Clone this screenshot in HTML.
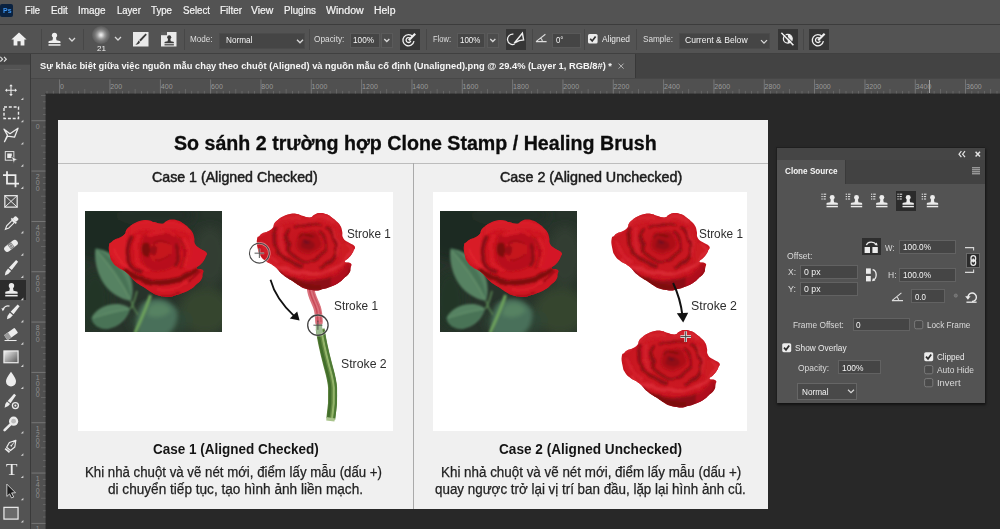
<!DOCTYPE html>
<html lang="vi"><head>
<meta charset="utf-8">
<title>Clone Source</title>
<style>
*{box-sizing:border-box;margin:0;padding:0}
html,body{width:1000px;height:529px;overflow:hidden;background:#282828}
body{position:relative;font-family:"Liberation Sans","DejaVu Sans",sans-serif;color:#e6e6e6;font-size:11px}
.r{position:absolute;display:block}
.t{position:absolute;white-space:nowrap;transform-origin:0 50%;line-height:1}
.f{position:absolute;background:#454545;border:1px solid #636363}
</style>
</head>
<body>
<div class="r" style="left:0.0px;top:0.0px;width:1000.0px;height:24.0px;background:#535353;"></div>
<div class="r" style="left:0.0px;top:23.5px;width:1000.0px;height:1.5px;background:#3c3c3c;"></div>
<div class="r" style="left:0;top:4px;width:13px;height:12.5px;background:#0a2240;border-radius:2px"></div>
<div class="t" style="left: 2.5px; top: 7px; font-size: 7.8px; color: rgb(61, 149, 240); font-weight: bold; transform: scaleX(0.8903);">Ps</div>
<div class="t" style="left: 25px; top: 6px; font-size: 10px; color: rgb(244, 244, 244); font-weight: normal; -webkit-text-stroke: 0.2px rgb(244, 244, 244); transform: scaleX(0.9302);">File</div>
<div class="t" style="left: 51px; top: 6px; font-size: 10px; color: rgb(244, 244, 244); font-weight: normal; -webkit-text-stroke: 0.2px rgb(244, 244, 244); transform: scaleX(0.9748);">Edit</div>
<div class="t" style="left: 78.4px; top: 6px; font-size: 10px; color: rgb(244, 244, 244); font-weight: normal; -webkit-text-stroke: 0.2px rgb(244, 244, 244); transform: scaleX(0.9929);">Image</div>
<div class="t" style="left: 116.7px; top: 6px; font-size: 10px; color: rgb(244, 244, 244); font-weight: normal; -webkit-text-stroke: 0.2px rgb(244, 244, 244); transform: scaleX(0.9514);">Layer</div>
<div class="t" style="left: 151px; top: 6px; font-size: 10px; color: rgb(244, 244, 244); font-weight: normal; -webkit-text-stroke: 0.2px rgb(244, 244, 244); transform: scaleX(0.9683);">Type</div>
<div class="t" style="left: 182.5px; top: 6px; font-size: 10px; color: rgb(244, 244, 244); font-weight: normal; -webkit-text-stroke: 0.2px rgb(244, 244, 244); transform: scaleX(0.9713);">Select</div>
<div class="t" style="left: 219.5px; top: 6px; font-size: 10px; color: rgb(244, 244, 244); font-weight: normal; -webkit-text-stroke: 0.2px rgb(244, 244, 244); transform: scaleX(0.9895);">Filter</div>
<div class="t" style="left: 251.3px; top: 6px; font-size: 10px; color: rgb(244, 244, 244); font-weight: normal; -webkit-text-stroke: 0.2px rgb(244, 244, 244); transform: scaleX(1.0419);">View</div>
<div class="t" style="left: 284px; top: 6px; font-size: 10px; color: rgb(244, 244, 244); font-weight: normal; -webkit-text-stroke: 0.2px rgb(244, 244, 244); transform: scaleX(0.9752);">Plugins</div>
<div class="t" style="left: 326px; top: 6px; font-size: 10px; color: rgb(244, 244, 244); font-weight: normal; -webkit-text-stroke: 0.2px rgb(244, 244, 244); transform: scaleX(1.0596);">Window</div>
<div class="t" style="left: 374px; top: 6px; font-size: 10px; color: rgb(244, 244, 244); font-weight: normal; -webkit-text-stroke: 0.2px rgb(244, 244, 244); transform: scaleX(1.0448);">Help</div>
<div class="r" style="left:0.0px;top:25.0px;width:1000.0px;height:29.0px;background:#535353;"></div>
<div class="r" style="left:0.0px;top:53.0px;width:1000.0px;height:1.0px;background:#404040;"></div>
<div class="r" style="left:41.0px;top:29.0px;width:1.0px;height:21.0px;background:#474747;"></div>
<div class="r" style="left:83.0px;top:29.0px;width:1.0px;height:21.0px;background:#474747;"></div>
<div class="r" style="left:184.0px;top:29.0px;width:1.0px;height:21.0px;background:#474747;"></div>
<div class="r" style="left:308.5px;top:29.0px;width:1.0px;height:21.0px;background:#474747;"></div>
<div class="r" style="left:426.0px;top:29.0px;width:1.0px;height:21.0px;background:#474747;"></div>
<div class="r" style="left:532.0px;top:29.0px;width:1.0px;height:21.0px;background:#474747;"></div>
<div class="r" style="left:584.0px;top:29.0px;width:1.0px;height:21.0px;background:#474747;"></div>
<div class="r" style="left:636.0px;top:29.0px;width:1.0px;height:21.0px;background:#474747;"></div>
<div class="r" style="left:803.0px;top:29.0px;width:1.0px;height:21.0px;background:#474747;"></div>
<svg class="r" style="left:11.0px;top:32.0px;" width="16" height="14" viewBox="0 0 16 14"><path d="M8 0.6 L15.6 7.6 L13.4 7.6 L13.4 13.4 L9.6 13.4 L9.6 9.2 L6.4 9.2 L6.4 13.4 L2.6 13.4 L2.6 7.6 L0.4 7.6 Z" fill="#efefef"></path></svg>
<svg class="r" style="left:44.0px;top:27.0px;" width="40" height="26" viewBox="0 0 40 26"><g transform="translate(10.5,12.3) scale(1.0)" fill="#efefef"><circle cx="0" cy="-4" r="2.6"></circle><path d="M-1.4 -2.4 L1.4 -2.4 L2 1 L5.2 1.6 Q6 1.8 6 2.6 L6 3.8 L-6 3.8 L-6 2.6 Q-6 1.8 -5.2 1.6 L-2 1 Z"></path><rect x="-6" y="4.9" width="12" height="1.5"></rect></g><path d="M25.0 11.0 L28 14.0 L31.0 11.0" fill="none" stroke="#d8d8d8" stroke-width="1.3"></path></svg>
<div class="r" style="left:92px;top:25.5px;width:18px;height:18px;border-radius:50%;background:radial-gradient(circle,#f6f6f6 0%,#d0d0d0 14%,#9c9c9c 30%,#757575 48%,#606060 66%,#565656 84%,#535353 100%)"></div>
<div class="t" style="left: 96.5px; top: 45px; font-size: 7.6px; color: rgb(240, 240, 240); font-weight: normal; transform: scaleX(1.0647);">21</div>
<svg class="r" style="left:110.0px;top:30.0px;" width="16" height="16" viewBox="0 0 16 16"><path d="M5.0 7.0 L8 10.0 L11.0 7.0" fill="none" stroke="#d8d8d8" stroke-width="1.3"></path></svg>
<svg class="r" style="left:133.0px;top:32.0px;" width="16" height="15" viewBox="0 0 16 15"><rect x="0" y="0" width="15.5" height="14.5" fill="#e9e9e9"></rect><path d="M12.6 1.6 L13.8 2.8 L7.6 9.4 L6.2 8 Z" fill="#3a3a3a"></path><path d="M5.6 8.6 L7 10 Q6.2 12.6 2.4 12.8 Q4.6 11 5.6 8.6Z" fill="#3a3a3a"></path></svg>
<svg class="r" style="left:161.0px;top:32.0px;" width="16" height="15" viewBox="0 0 16 15"><rect x="0" y="0" width="15.5" height="14.5" fill="#e9e9e9"></rect><rect x="0" y="0" width="6" height="3.2" fill="#5a5a5a"></rect><g transform="translate(8.2,8.4) scale(0.78)" fill="#3a3a3a"><circle cx="0" cy="-4" r="2.6"></circle><path d="M-1.4 -2.4 L1.4 -2.4 L2 1 L5.2 1.6 Q6 1.8 6 2.6 L6 3.8 L-6 3.8 L-6 2.6 Q-6 1.8 -5.2 1.6 L-2 1 Z"></path><rect x="-6" y="4.9" width="12" height="1.5"></rect></g></svg>
<div class="t" style="left: 190.4px; top: 35px; font-size: 8.7px; color: rgb(222, 222, 222); font-weight: normal; transform: scaleX(0.9356);">Mode:</div>
<div class="f" style="left:219px;top:33px;width:86px;height:15.5px;background:#454545;border-color:#4b4b4b"></div>
<div class="t" style="left: 225.6px; top: 36px; font-size: 8.7px; color: rgb(244, 244, 244); font-weight: normal; transform: scaleX(0.9429);">Normal</div>
<svg class="r" style="left:292.0px;top:33.0px;" width="16" height="16" viewBox="0 0 16 16"><path d="M5.0 6.800000000000001 L8 9.8 L11.0 6.800000000000001" fill="none" stroke="#d8d8d8" stroke-width="1.3"></path></svg>
<div class="t" style="left: 313.6px; top: 35px; font-size: 8.7px; color: rgb(222, 222, 222); font-weight: normal; transform: scaleX(0.9537);">Opacity:</div>
<div class="f" style="left:350px;top:33px;width:30px;height:14.5px;background:#454545;border-color:#595959"></div>
<div class="t" style="left: 353px; top: 36px; font-size: 8.7px; color: rgb(244, 244, 244); font-weight: normal; transform: scaleX(0.9445);">100%</div>
<div class="f" style="left:381px;top:33px;width:11.5px;height:14.5px;background:#4c4c4c;border-color:#5a5a5a"></div>
<svg class="r" style="left:379.0px;top:32.0px;" width="16" height="16" viewBox="0 0 16 16"><path d="M5.25 7.025 L7.8 9.575000000000001 L10.35 7.025" fill="none" stroke="#d8d8d8" stroke-width="1.3"></path></svg>
<div class="r" style="left:399.6px;top:29.0px;width:20.4px;height:20.5px;background:#363636;"></div>
<svg class="r" style="left:399.0px;top:29.0px;" width="22" height="21" viewBox="0 0 22 21"><g fill="none" stroke="#efefef" stroke-width="1.3"><path d="M13.8 7.6000000000000005 A5.6 5.6 0 1 0 15.0 12.200000000000001"></path><path d="M11.2 9.4 A2.4 2.4 0 1 0 11.8 11.8"></path><path d="M9.799999999999999 11.200000000000001 L16.2 4.800000000000001" stroke-width="2.2"></path></g></svg>
<div class="t" style="left: 433px; top: 35px; font-size: 8.7px; color: rgb(222, 222, 222); font-weight: normal; transform: scaleX(0.8668);">Flow:</div>
<div class="f" style="left:457px;top:33px;width:28px;height:14.5px;background:#454545;border-color:#595959"></div>
<div class="t" style="left: 459.6px; top: 36px; font-size: 8.7px; color: rgb(244, 244, 244); font-weight: normal; transform: scaleX(0.9175);">100%</div>
<div class="f" style="left:487px;top:33px;width:11.5px;height:14.5px;background:#4c4c4c;border-color:#5a5a5a"></div>
<svg class="r" style="left:485.0px;top:32.0px;" width="16" height="16" viewBox="0 0 16 16"><path d="M5.25 7.025 L7.8 9.575000000000001 L10.35 7.025" fill="none" stroke="#d8d8d8" stroke-width="1.3"></path></svg>
<div class="r" style="left:506.4px;top:29.0px;width:20.0px;height:20.5px;background:#363636;"></div>
<svg class="r" style="left:506.0px;top:29.0px;" width="22" height="21" viewBox="0 0 22 21"><g fill="none" stroke="#efefef" stroke-width="1.3"><path d="M7.4 5.2 A5.2 5.2 0 1 0 8.6 15.2"></path><path d="M8.2 14.2 L16.4 4.2 L17.6 11 L13.2 11.6 Z" fill="#363636" stroke-width="1.4"></path></g></svg>
<svg class="r" style="left:535.0px;top:32.0px;" width="14" height="12" viewBox="0 0 14 12"><path d="M1 9.6 L11.6 9.6 M1 9.6 L10.4 2.2 M7.4 9.4 A5 5 0 0 0 5.6 6" fill="none" stroke="#dcdcdc" stroke-width="1.1"></path></svg>
<div class="f" style="left:552.4px;top:33px;width:28.6px;height:14.5px;background:#454545;border-color:#595959"></div>
<div class="t" style="left: 556px; top: 36px; font-size: 8.7px; color: rgb(244, 244, 244); font-weight: normal; transform: scaleX(0.9023);">0°</div>
<svg class="r" style="left:588.0px;top:34.0px;" width="10" height="10" viewBox="0 0 10 10"><rect x="0" y="0" width="9.6" height="9.6" rx="1.6" fill="#ececec"></rect><path d="M2.2 4.8 L4.2 7 L7.6 2.6" fill="none" stroke="#333" stroke-width="1.7"></path></svg>
<div class="t" style="left: 601.6px; top: 35px; font-size: 8.7px; color: rgb(236, 236, 236); font-weight: normal; transform: scaleX(0.966);">Aligned</div>
<div class="t" style="left: 643px; top: 35px; font-size: 8.7px; color: rgb(222, 222, 222); font-weight: normal; transform: scaleX(0.9412);">Sample:</div>
<div class="f" style="left:679px;top:32.5px;width:90.6px;height:16.5px;background:#454545;border-color:#4b4b4b"></div>
<div class="t" style="left: 685px; top: 36px; font-size: 8.7px; color: rgb(244, 244, 244); font-weight: normal; transform: scaleX(0.9895);">Current &amp; Below</div>
<svg class="r" style="left:756.4px;top:33.0px;" width="16" height="16" viewBox="0 0 16 16"><path d="M5.0 7.1 L8 10.1 L11.0 7.1" fill="none" stroke="#d8d8d8" stroke-width="1.3"></path></svg>
<div class="r" style="left:778.0px;top:29.0px;width:19.5px;height:20.5px;background:#363636;"></div>
<svg class="r" style="left:777.0px;top:29.0px;" width="22" height="21" viewBox="0 0 22 21"><circle cx="10.8" cy="9.8" r="4.4" fill="none" stroke="#efefef" stroke-width="1.3"></circle><path d="M10.8 5.4 A4.4 4.4 0 0 1 10.8 14.2 Z" fill="#efefef"></path><path d="M4.4 3.8 L16.4 16.2" stroke="#efefef" stroke-width="1.6"></path><path d="M5.4 2.8 L17.4 15.2" stroke="#363636" stroke-width="1"></path></svg>
<div class="r" style="left:809.0px;top:29.0px;width:20.0px;height:20.5px;background:#363636;"></div>
<svg class="r" style="left:808.0px;top:29.0px;" width="22" height="21" viewBox="0 0 22 21"><g fill="none" stroke="#efefef" stroke-width="1.3"><path d="M14.2 7.6000000000000005 A5.6 5.6 0 1 0 15.4 12.200000000000001"></path><path d="M11.6 9.4 A2.4 2.4 0 1 0 12.2 11.8"></path><path d="M10.2 11.200000000000001 L16.6 4.800000000000001" stroke-width="2.2"></path></g></svg>
<div class="r" style="left:0.0px;top:54.0px;width:1000.0px;height:24.5px;background:#434343;"></div>
<div class="r" style="left:31.0px;top:54.0px;width:603.5px;height:24.5px;background:#535353;"></div>
<div class="r" style="left:634.5px;top:54.0px;width:1.0px;height:24.5px;background:#383838;"></div>
<div class="t" style="left: 39.5px; top: 61px; font-size: 9.6px; color: rgb(246, 246, 246); font-weight: bold; transform: scaleX(0.9723);">Sự khác biệt giữa việc nguồn mẫu chạy theo chuột (Aligned) và nguồn mẫu cố định (Unaligned).png @ 29.4% (Layer 1, RGB/8#) *</div>
<svg class="r" style="left:617.0px;top:62.0px;" width="9" height="9" viewBox="0 0 9 9"><path d="M1.6 1.6 L6.6 6.6 M6.6 1.6 L1.6 6.6" stroke="#b4b4b4" stroke-width="1" fill="none"></path></svg>
<div class="r" style="left:31.0px;top:78.5px;width:969.0px;height:14.5px;background:#505050;"></div>
<div class="r" style="left:31.0px;top:78.0px;width:969.0px;height:0.8px;background:#474747;"></div>
<div class="r" style="left:31.0px;top:92.6px;width:969.0px;height:0.9px;background:#3e3e3e;"></div>
<div class="r" style="left:31.0px;top:93.0px;width:14.5px;height:436.0px;background:#505050;"></div>
<div class="r" style="left:45.2px;top:93.0px;width:0.9px;height:436.0px;background:#3e3e3e;"></div>
<svg class="r" style="left:31.0px;top:78.5px;" width="969" height="15" viewBox="0 0 969 15"><rect x="15.6" y="11.9" width="0.8" height="2.6" fill="#6c6c6c"></rect><rect x="21.9" y="11.9" width="0.8" height="2.6" fill="#6c6c6c"></rect><rect x="28.2" y="0.5" width="0.9" height="14" fill="#7a7a7a"></rect><rect x="34.5" y="11.9" width="0.8" height="2.6" fill="#6c6c6c"></rect><rect x="40.8" y="11.9" width="0.8" height="2.6" fill="#6c6c6c"></rect><rect x="47.1" y="11.9" width="0.8" height="2.6" fill="#6c6c6c"></rect><rect x="53.4" y="10.0" width="0.8" height="4.5" fill="#6c6c6c"></rect><rect x="59.7" y="11.9" width="0.8" height="2.6" fill="#6c6c6c"></rect><rect x="65.9" y="11.9" width="0.8" height="2.6" fill="#6c6c6c"></rect><rect x="72.2" y="11.9" width="0.8" height="2.6" fill="#6c6c6c"></rect><rect x="78.5" y="0.5" width="0.9" height="14" fill="#7a7a7a"></rect><rect x="84.8" y="11.9" width="0.8" height="2.6" fill="#6c6c6c"></rect><rect x="91.1" y="11.9" width="0.8" height="2.6" fill="#6c6c6c"></rect><rect x="97.4" y="11.9" width="0.8" height="2.6" fill="#6c6c6c"></rect><rect x="103.7" y="10.0" width="0.8" height="4.5" fill="#6c6c6c"></rect><rect x="110.0" y="11.9" width="0.8" height="2.6" fill="#6c6c6c"></rect><rect x="116.3" y="11.9" width="0.8" height="2.6" fill="#6c6c6c"></rect><rect x="122.6" y="11.9" width="0.8" height="2.6" fill="#6c6c6c"></rect><rect x="128.9" y="0.5" width="0.9" height="14" fill="#7a7a7a"></rect><rect x="135.2" y="11.9" width="0.8" height="2.6" fill="#6c6c6c"></rect><rect x="141.4" y="11.9" width="0.8" height="2.6" fill="#6c6c6c"></rect><rect x="147.7" y="11.9" width="0.8" height="2.6" fill="#6c6c6c"></rect><rect x="154.0" y="10.0" width="0.8" height="4.5" fill="#6c6c6c"></rect><rect x="160.3" y="11.9" width="0.8" height="2.6" fill="#6c6c6c"></rect><rect x="166.6" y="11.9" width="0.8" height="2.6" fill="#6c6c6c"></rect><rect x="172.9" y="11.9" width="0.8" height="2.6" fill="#6c6c6c"></rect><rect x="179.2" y="0.5" width="0.9" height="14" fill="#7a7a7a"></rect><rect x="185.5" y="11.9" width="0.8" height="2.6" fill="#6c6c6c"></rect><rect x="191.8" y="11.9" width="0.8" height="2.6" fill="#6c6c6c"></rect><rect x="198.1" y="11.9" width="0.8" height="2.6" fill="#6c6c6c"></rect><rect x="204.4" y="10.0" width="0.8" height="4.5" fill="#6c6c6c"></rect><rect x="210.6" y="11.9" width="0.8" height="2.6" fill="#6c6c6c"></rect><rect x="216.9" y="11.9" width="0.8" height="2.6" fill="#6c6c6c"></rect><rect x="223.2" y="11.9" width="0.8" height="2.6" fill="#6c6c6c"></rect><rect x="229.5" y="0.5" width="0.9" height="14" fill="#7a7a7a"></rect><rect x="235.8" y="11.9" width="0.8" height="2.6" fill="#6c6c6c"></rect><rect x="242.1" y="11.9" width="0.8" height="2.6" fill="#6c6c6c"></rect><rect x="248.4" y="11.9" width="0.8" height="2.6" fill="#6c6c6c"></rect><rect x="254.7" y="10.0" width="0.8" height="4.5" fill="#6c6c6c"></rect><rect x="261.0" y="11.9" width="0.8" height="2.6" fill="#6c6c6c"></rect><rect x="267.3" y="11.9" width="0.8" height="2.6" fill="#6c6c6c"></rect><rect x="273.6" y="11.9" width="0.8" height="2.6" fill="#6c6c6c"></rect><rect x="279.8" y="0.5" width="0.9" height="14" fill="#7a7a7a"></rect><rect x="286.1" y="11.9" width="0.8" height="2.6" fill="#6c6c6c"></rect><rect x="292.4" y="11.9" width="0.8" height="2.6" fill="#6c6c6c"></rect><rect x="298.7" y="11.9" width="0.8" height="2.6" fill="#6c6c6c"></rect><rect x="305.0" y="10.0" width="0.8" height="4.5" fill="#6c6c6c"></rect><rect x="311.3" y="11.9" width="0.8" height="2.6" fill="#6c6c6c"></rect><rect x="317.6" y="11.9" width="0.8" height="2.6" fill="#6c6c6c"></rect><rect x="323.9" y="11.9" width="0.8" height="2.6" fill="#6c6c6c"></rect><rect x="330.2" y="0.5" width="0.9" height="14" fill="#7a7a7a"></rect><rect x="336.5" y="11.9" width="0.8" height="2.6" fill="#6c6c6c"></rect><rect x="342.8" y="11.9" width="0.8" height="2.6" fill="#6c6c6c"></rect><rect x="349.1" y="11.9" width="0.8" height="2.6" fill="#6c6c6c"></rect><rect x="355.3" y="10.0" width="0.8" height="4.5" fill="#6c6c6c"></rect><rect x="361.6" y="11.9" width="0.8" height="2.6" fill="#6c6c6c"></rect><rect x="367.9" y="11.9" width="0.8" height="2.6" fill="#6c6c6c"></rect><rect x="374.2" y="11.9" width="0.8" height="2.6" fill="#6c6c6c"></rect><rect x="380.5" y="0.5" width="0.9" height="14" fill="#7a7a7a"></rect><rect x="386.8" y="11.9" width="0.8" height="2.6" fill="#6c6c6c"></rect><rect x="393.1" y="11.9" width="0.8" height="2.6" fill="#6c6c6c"></rect><rect x="399.4" y="11.9" width="0.8" height="2.6" fill="#6c6c6c"></rect><rect x="405.7" y="10.0" width="0.8" height="4.5" fill="#6c6c6c"></rect><rect x="412.0" y="11.9" width="0.8" height="2.6" fill="#6c6c6c"></rect><rect x="418.3" y="11.9" width="0.8" height="2.6" fill="#6c6c6c"></rect><rect x="424.5" y="11.9" width="0.8" height="2.6" fill="#6c6c6c"></rect><rect x="430.8" y="0.5" width="0.9" height="14" fill="#7a7a7a"></rect><rect x="437.1" y="11.9" width="0.8" height="2.6" fill="#6c6c6c"></rect><rect x="443.4" y="11.9" width="0.8" height="2.6" fill="#6c6c6c"></rect><rect x="449.7" y="11.9" width="0.8" height="2.6" fill="#6c6c6c"></rect><rect x="456.0" y="10.0" width="0.8" height="4.5" fill="#6c6c6c"></rect><rect x="462.3" y="11.9" width="0.8" height="2.6" fill="#6c6c6c"></rect><rect x="468.6" y="11.9" width="0.8" height="2.6" fill="#6c6c6c"></rect><rect x="474.9" y="11.9" width="0.8" height="2.6" fill="#6c6c6c"></rect><rect x="481.2" y="0.5" width="0.9" height="14" fill="#7a7a7a"></rect><rect x="487.5" y="11.9" width="0.8" height="2.6" fill="#6c6c6c"></rect><rect x="493.8" y="11.9" width="0.8" height="2.6" fill="#6c6c6c"></rect><rect x="500.0" y="11.9" width="0.8" height="2.6" fill="#6c6c6c"></rect><rect x="506.3" y="10.0" width="0.8" height="4.5" fill="#6c6c6c"></rect><rect x="512.6" y="11.9" width="0.8" height="2.6" fill="#6c6c6c"></rect><rect x="518.9" y="11.9" width="0.8" height="2.6" fill="#6c6c6c"></rect><rect x="525.2" y="11.9" width="0.8" height="2.6" fill="#6c6c6c"></rect><rect x="531.5" y="0.5" width="0.9" height="14" fill="#7a7a7a"></rect><rect x="537.8" y="11.9" width="0.8" height="2.6" fill="#6c6c6c"></rect><rect x="544.1" y="11.9" width="0.8" height="2.6" fill="#6c6c6c"></rect><rect x="550.4" y="11.9" width="0.8" height="2.6" fill="#6c6c6c"></rect><rect x="556.7" y="10.0" width="0.8" height="4.5" fill="#6c6c6c"></rect><rect x="563.0" y="11.9" width="0.8" height="2.6" fill="#6c6c6c"></rect><rect x="569.2" y="11.9" width="0.8" height="2.6" fill="#6c6c6c"></rect><rect x="575.5" y="11.9" width="0.8" height="2.6" fill="#6c6c6c"></rect><rect x="581.8" y="0.5" width="0.9" height="14" fill="#7a7a7a"></rect><rect x="588.1" y="11.9" width="0.8" height="2.6" fill="#6c6c6c"></rect><rect x="594.4" y="11.9" width="0.8" height="2.6" fill="#6c6c6c"></rect><rect x="600.7" y="11.9" width="0.8" height="2.6" fill="#6c6c6c"></rect><rect x="607.0" y="10.0" width="0.8" height="4.5" fill="#6c6c6c"></rect><rect x="613.3" y="11.9" width="0.8" height="2.6" fill="#6c6c6c"></rect><rect x="619.6" y="11.9" width="0.8" height="2.6" fill="#6c6c6c"></rect><rect x="625.9" y="11.9" width="0.8" height="2.6" fill="#6c6c6c"></rect><rect x="632.2" y="0.5" width="0.9" height="14" fill="#7a7a7a"></rect><rect x="638.5" y="11.9" width="0.8" height="2.6" fill="#6c6c6c"></rect><rect x="644.7" y="11.9" width="0.8" height="2.6" fill="#6c6c6c"></rect><rect x="651.0" y="11.9" width="0.8" height="2.6" fill="#6c6c6c"></rect><rect x="657.3" y="10.0" width="0.8" height="4.5" fill="#6c6c6c"></rect><rect x="663.6" y="11.9" width="0.8" height="2.6" fill="#6c6c6c"></rect><rect x="669.9" y="11.9" width="0.8" height="2.6" fill="#6c6c6c"></rect><rect x="676.2" y="11.9" width="0.8" height="2.6" fill="#6c6c6c"></rect><rect x="682.5" y="0.5" width="0.9" height="14" fill="#7a7a7a"></rect><rect x="688.8" y="11.9" width="0.8" height="2.6" fill="#6c6c6c"></rect><rect x="695.1" y="11.9" width="0.8" height="2.6" fill="#6c6c6c"></rect><rect x="701.4" y="11.9" width="0.8" height="2.6" fill="#6c6c6c"></rect><rect x="707.7" y="10.0" width="0.8" height="4.5" fill="#6c6c6c"></rect><rect x="713.9" y="11.9" width="0.8" height="2.6" fill="#6c6c6c"></rect><rect x="720.2" y="11.9" width="0.8" height="2.6" fill="#6c6c6c"></rect><rect x="726.5" y="11.9" width="0.8" height="2.6" fill="#6c6c6c"></rect><rect x="732.8" y="0.5" width="0.9" height="14" fill="#7a7a7a"></rect><rect x="739.1" y="11.9" width="0.8" height="2.6" fill="#6c6c6c"></rect><rect x="745.4" y="11.9" width="0.8" height="2.6" fill="#6c6c6c"></rect><rect x="751.7" y="11.9" width="0.8" height="2.6" fill="#6c6c6c"></rect><rect x="758.0" y="10.0" width="0.8" height="4.5" fill="#6c6c6c"></rect><rect x="764.3" y="11.9" width="0.8" height="2.6" fill="#6c6c6c"></rect><rect x="770.6" y="11.9" width="0.8" height="2.6" fill="#6c6c6c"></rect><rect x="776.9" y="11.9" width="0.8" height="2.6" fill="#6c6c6c"></rect><rect x="783.1" y="0.5" width="0.9" height="14" fill="#7a7a7a"></rect><rect x="789.4" y="11.9" width="0.8" height="2.6" fill="#6c6c6c"></rect><rect x="795.7" y="11.9" width="0.8" height="2.6" fill="#6c6c6c"></rect><rect x="802.0" y="11.9" width="0.8" height="2.6" fill="#6c6c6c"></rect><rect x="808.3" y="10.0" width="0.8" height="4.5" fill="#6c6c6c"></rect><rect x="814.6" y="11.9" width="0.8" height="2.6" fill="#6c6c6c"></rect><rect x="820.9" y="11.9" width="0.8" height="2.6" fill="#6c6c6c"></rect><rect x="827.2" y="11.9" width="0.8" height="2.6" fill="#6c6c6c"></rect><rect x="833.5" y="0.5" width="0.9" height="14" fill="#7a7a7a"></rect><rect x="839.8" y="11.9" width="0.8" height="2.6" fill="#6c6c6c"></rect><rect x="846.1" y="11.9" width="0.8" height="2.6" fill="#6c6c6c"></rect><rect x="852.4" y="11.9" width="0.8" height="2.6" fill="#6c6c6c"></rect><rect x="858.6" y="10.0" width="0.8" height="4.5" fill="#6c6c6c"></rect><rect x="864.9" y="11.9" width="0.8" height="2.6" fill="#6c6c6c"></rect><rect x="871.2" y="11.9" width="0.8" height="2.6" fill="#6c6c6c"></rect><rect x="877.5" y="11.9" width="0.8" height="2.6" fill="#6c6c6c"></rect><rect x="883.8" y="0.5" width="0.9" height="14" fill="#7a7a7a"></rect><rect x="890.1" y="11.9" width="0.8" height="2.6" fill="#6c6c6c"></rect><rect x="896.4" y="11.9" width="0.8" height="2.6" fill="#6c6c6c"></rect><rect x="902.7" y="11.9" width="0.8" height="2.6" fill="#6c6c6c"></rect><rect x="909.0" y="10.0" width="0.8" height="4.5" fill="#6c6c6c"></rect><rect x="915.3" y="11.9" width="0.8" height="2.6" fill="#6c6c6c"></rect><rect x="921.6" y="11.9" width="0.8" height="2.6" fill="#6c6c6c"></rect><rect x="927.8" y="11.9" width="0.8" height="2.6" fill="#6c6c6c"></rect><rect x="934.1" y="0.5" width="0.9" height="14" fill="#7a7a7a"></rect><rect x="940.4" y="11.9" width="0.8" height="2.6" fill="#6c6c6c"></rect><rect x="946.7" y="11.9" width="0.8" height="2.6" fill="#6c6c6c"></rect><rect x="953.0" y="11.9" width="0.8" height="2.6" fill="#6c6c6c"></rect><rect x="959.3" y="10.0" width="0.8" height="4.5" fill="#6c6c6c"></rect><rect x="965.6" y="11.9" width="0.8" height="2.6" fill="#6c6c6c"></rect></svg>
<div class="t" style="left:60.0px;top:83px;font-size:7px;color:#9a9a9a;font-weight:normal;letter-spacing:0.1px;">0</div>
<div class="t" style="left:110.3px;top:83px;font-size:7px;color:#9a9a9a;font-weight:normal;letter-spacing:0.1px;">200</div>
<div class="t" style="left:160.7px;top:83px;font-size:7px;color:#9a9a9a;font-weight:normal;letter-spacing:0.1px;">400</div>
<div class="t" style="left:211.0px;top:83px;font-size:7px;color:#9a9a9a;font-weight:normal;letter-spacing:0.1px;">600</div>
<div class="t" style="left:261.3px;top:83px;font-size:7px;color:#9a9a9a;font-weight:normal;letter-spacing:0.1px;">800</div>
<div class="t" style="left:311.6px;top:83px;font-size:7px;color:#9a9a9a;font-weight:normal;letter-spacing:0.1px;">1000</div>
<div class="t" style="left:362.0px;top:83px;font-size:7px;color:#9a9a9a;font-weight:normal;letter-spacing:0.1px;">1200</div>
<div class="t" style="left:412.3px;top:83px;font-size:7px;color:#9a9a9a;font-weight:normal;letter-spacing:0.1px;">1400</div>
<div class="t" style="left:462.6px;top:83px;font-size:7px;color:#9a9a9a;font-weight:normal;letter-spacing:0.1px;">1600</div>
<div class="t" style="left:513.0px;top:83px;font-size:7px;color:#9a9a9a;font-weight:normal;letter-spacing:0.1px;">1800</div>
<div class="t" style="left:563.3px;top:83px;font-size:7px;color:#9a9a9a;font-weight:normal;letter-spacing:0.1px;">2000</div>
<div class="t" style="left:613.6px;top:83px;font-size:7px;color:#9a9a9a;font-weight:normal;letter-spacing:0.1px;">2200</div>
<div class="t" style="left:664.0px;top:83px;font-size:7px;color:#9a9a9a;font-weight:normal;letter-spacing:0.1px;">2400</div>
<div class="t" style="left:714.3px;top:83px;font-size:7px;color:#9a9a9a;font-weight:normal;letter-spacing:0.1px;">2600</div>
<div class="t" style="left:764.6px;top:83px;font-size:7px;color:#9a9a9a;font-weight:normal;letter-spacing:0.1px;">2800</div>
<div class="t" style="left:814.9px;top:83px;font-size:7px;color:#9a9a9a;font-weight:normal;letter-spacing:0.1px;">3000</div>
<div class="t" style="left:865.3px;top:83px;font-size:7px;color:#9a9a9a;font-weight:normal;letter-spacing:0.1px;">3200</div>
<div class="t" style="left:915.6px;top:83px;font-size:7px;color:#9a9a9a;font-weight:normal;letter-spacing:0.1px;">3400</div>
<div class="t" style="left:965.9px;top:83px;font-size:7px;color:#9a9a9a;font-weight:normal;letter-spacing:0.1px;">3600</div>
<svg class="r" style="left:31.0px;top:93.0px;" width="15" height="436" viewBox="0 0 15 436"><rect x="10.0" y="2.1" width="4.5" height="0.8" fill="#6c6c6c"></rect><rect x="11.9" y="8.4" width="2.6" height="0.8" fill="#6c6c6c"></rect><rect x="11.9" y="14.7" width="2.6" height="0.8" fill="#6c6c6c"></rect><rect x="11.9" y="21.0" width="2.6" height="0.8" fill="#6c6c6c"></rect><rect x="0.5" y="27.3" width="14" height="0.9" fill="#7a7a7a"></rect><rect x="11.9" y="33.6" width="2.6" height="0.8" fill="#6c6c6c"></rect><rect x="11.9" y="39.9" width="2.6" height="0.8" fill="#6c6c6c"></rect><rect x="11.9" y="46.2" width="2.6" height="0.8" fill="#6c6c6c"></rect><rect x="10.0" y="52.5" width="4.5" height="0.8" fill="#6c6c6c"></rect><rect x="11.9" y="58.8" width="2.6" height="0.8" fill="#6c6c6c"></rect><rect x="11.9" y="65.0" width="2.6" height="0.8" fill="#6c6c6c"></rect><rect x="11.9" y="71.3" width="2.6" height="0.8" fill="#6c6c6c"></rect><rect x="0.5" y="77.6" width="14" height="0.9" fill="#7a7a7a"></rect><rect x="11.9" y="83.9" width="2.6" height="0.8" fill="#6c6c6c"></rect><rect x="11.9" y="90.2" width="2.6" height="0.8" fill="#6c6c6c"></rect><rect x="11.9" y="96.5" width="2.6" height="0.8" fill="#6c6c6c"></rect><rect x="10.0" y="102.8" width="4.5" height="0.8" fill="#6c6c6c"></rect><rect x="11.9" y="109.1" width="2.6" height="0.8" fill="#6c6c6c"></rect><rect x="11.9" y="115.4" width="2.6" height="0.8" fill="#6c6c6c"></rect><rect x="11.9" y="121.7" width="2.6" height="0.8" fill="#6c6c6c"></rect><rect x="0.5" y="128.0" width="14" height="0.9" fill="#7a7a7a"></rect><rect x="11.9" y="134.3" width="2.6" height="0.8" fill="#6c6c6c"></rect><rect x="11.9" y="140.5" width="2.6" height="0.8" fill="#6c6c6c"></rect><rect x="11.9" y="146.8" width="2.6" height="0.8" fill="#6c6c6c"></rect><rect x="10.0" y="153.1" width="4.5" height="0.8" fill="#6c6c6c"></rect><rect x="11.9" y="159.4" width="2.6" height="0.8" fill="#6c6c6c"></rect><rect x="11.9" y="165.7" width="2.6" height="0.8" fill="#6c6c6c"></rect><rect x="11.9" y="172.0" width="2.6" height="0.8" fill="#6c6c6c"></rect><rect x="0.5" y="178.3" width="14" height="0.9" fill="#7a7a7a"></rect><rect x="11.9" y="184.6" width="2.6" height="0.8" fill="#6c6c6c"></rect><rect x="11.9" y="190.9" width="2.6" height="0.8" fill="#6c6c6c"></rect><rect x="11.9" y="197.2" width="2.6" height="0.8" fill="#6c6c6c"></rect><rect x="10.0" y="203.5" width="4.5" height="0.8" fill="#6c6c6c"></rect><rect x="11.9" y="209.7" width="2.6" height="0.8" fill="#6c6c6c"></rect><rect x="11.9" y="216.0" width="2.6" height="0.8" fill="#6c6c6c"></rect><rect x="11.9" y="222.3" width="2.6" height="0.8" fill="#6c6c6c"></rect><rect x="0.5" y="228.6" width="14" height="0.9" fill="#7a7a7a"></rect><rect x="11.9" y="234.9" width="2.6" height="0.8" fill="#6c6c6c"></rect><rect x="11.9" y="241.2" width="2.6" height="0.8" fill="#6c6c6c"></rect><rect x="11.9" y="247.5" width="2.6" height="0.8" fill="#6c6c6c"></rect><rect x="10.0" y="253.8" width="4.5" height="0.8" fill="#6c6c6c"></rect><rect x="11.9" y="260.1" width="2.6" height="0.8" fill="#6c6c6c"></rect><rect x="11.9" y="266.4" width="2.6" height="0.8" fill="#6c6c6c"></rect><rect x="11.9" y="272.7" width="2.6" height="0.8" fill="#6c6c6c"></rect><rect x="0.5" y="278.9" width="14" height="0.9" fill="#7a7a7a"></rect><rect x="11.9" y="285.2" width="2.6" height="0.8" fill="#6c6c6c"></rect><rect x="11.9" y="291.5" width="2.6" height="0.8" fill="#6c6c6c"></rect><rect x="11.9" y="297.8" width="2.6" height="0.8" fill="#6c6c6c"></rect><rect x="10.0" y="304.1" width="4.5" height="0.8" fill="#6c6c6c"></rect><rect x="11.9" y="310.4" width="2.6" height="0.8" fill="#6c6c6c"></rect><rect x="11.9" y="316.7" width="2.6" height="0.8" fill="#6c6c6c"></rect><rect x="11.9" y="323.0" width="2.6" height="0.8" fill="#6c6c6c"></rect><rect x="0.5" y="329.3" width="14" height="0.9" fill="#7a7a7a"></rect><rect x="11.9" y="335.6" width="2.6" height="0.8" fill="#6c6c6c"></rect><rect x="11.9" y="341.9" width="2.6" height="0.8" fill="#6c6c6c"></rect><rect x="11.9" y="348.2" width="2.6" height="0.8" fill="#6c6c6c"></rect><rect x="10.0" y="354.4" width="4.5" height="0.8" fill="#6c6c6c"></rect><rect x="11.9" y="360.7" width="2.6" height="0.8" fill="#6c6c6c"></rect><rect x="11.9" y="367.0" width="2.6" height="0.8" fill="#6c6c6c"></rect><rect x="11.9" y="373.3" width="2.6" height="0.8" fill="#6c6c6c"></rect><rect x="0.5" y="379.6" width="14" height="0.9" fill="#7a7a7a"></rect><rect x="11.9" y="385.9" width="2.6" height="0.8" fill="#6c6c6c"></rect><rect x="11.9" y="392.2" width="2.6" height="0.8" fill="#6c6c6c"></rect><rect x="11.9" y="398.5" width="2.6" height="0.8" fill="#6c6c6c"></rect><rect x="10.0" y="404.8" width="4.5" height="0.8" fill="#6c6c6c"></rect><rect x="11.9" y="411.1" width="2.6" height="0.8" fill="#6c6c6c"></rect><rect x="11.9" y="417.4" width="2.6" height="0.8" fill="#6c6c6c"></rect><rect x="11.9" y="423.6" width="2.6" height="0.8" fill="#6c6c6c"></rect><rect x="0.5" y="429.9" width="14" height="0.9" fill="#7a7a7a"></rect></svg>
<div class="t" style="left:33.2px;top:122.8px;font-size:7px;color:#8e8e8e;writing-mode:vertical-rl;text-orientation:upright;letter-spacing:-1.2px;line-height:1;width:8px">0</div>
<div class="t" style="left:33.2px;top:173.1px;font-size:7px;color:#8e8e8e;writing-mode:vertical-rl;text-orientation:upright;letter-spacing:-1.2px;line-height:1;width:8px">200</div>
<div class="t" style="left:33.2px;top:223.5px;font-size:7px;color:#8e8e8e;writing-mode:vertical-rl;text-orientation:upright;letter-spacing:-1.2px;line-height:1;width:8px">400</div>
<div class="t" style="left:33.2px;top:273.8px;font-size:7px;color:#8e8e8e;writing-mode:vertical-rl;text-orientation:upright;letter-spacing:-1.2px;line-height:1;width:8px">600</div>
<div class="t" style="left:33.2px;top:324.1px;font-size:7px;color:#8e8e8e;writing-mode:vertical-rl;text-orientation:upright;letter-spacing:-1.2px;line-height:1;width:8px">800</div>
<div class="t" style="left:33.2px;top:374.4px;font-size:7px;color:#8e8e8e;writing-mode:vertical-rl;text-orientation:upright;letter-spacing:-1.2px;line-height:1;width:8px">1000</div>
<div class="t" style="left:33.2px;top:424.8px;font-size:7px;color:#8e8e8e;writing-mode:vertical-rl;text-orientation:upright;letter-spacing:-1.2px;line-height:1;width:8px">1200</div>
<div class="t" style="left:33.2px;top:475.1px;font-size:7px;color:#8e8e8e;writing-mode:vertical-rl;text-orientation:upright;letter-spacing:-1.2px;line-height:1;width:8px">1400</div>
<div class="t" style="left:33.2px;top:525.4px;font-size:7px;color:#8e8e8e;writing-mode:vertical-rl;text-orientation:upright;letter-spacing:-1.2px;line-height:1;width:8px">1600</div>
<div class="r" style="left:31.0px;top:78.5px;width:14.5px;height:14.5px;background:#505050;"></div>
<div class="r" style="left:929.0px;top:80.0px;width:1.0px;height:12.5px;background:#a0a0a0;"></div>
<div class="r" style="left:0.0px;top:54.0px;width:29.5px;height:475.0px;background:#535353;"></div>
<div class="r" style="left:29.5px;top:54.0px;width:1.5px;height:475.0px;background:#3a3a3a;"></div>
<div class="r" style="left:0.0px;top:54.0px;width:29.5px;height:10.0px;background:#454545;"></div>
<div class="r" style="left:0.0px;top:64.0px;width:29.5px;height:1.0px;background:#494949;"></div>
<svg class="r" style="left:0.0px;top:54.5px;" width="12" height="9" viewBox="0 0 12 9"><path d="M0.3 1.8 L2.6 4.2 L0.3 6.6 M4 1.8 L6.3 4.2 L4 6.6" fill="none" stroke="#dddddd" stroke-width="1.2"></path></svg>
<div class="r" style="left:4.0px;top:68.5px;width:17.0px;height:1.0px;background:#606060;"></div>
<div class="r" style="left:0.0px;top:280.0px;width:25.5px;height:20.0px;background:#2c2c2c;"></div>
<svg class="r" style="left:0.0px;top:54.0px;" width="30" height="475" viewBox="0 54 30 475"><g transform="translate(11,90.2) scale(0.8) translate(-11,-90.2)"><g stroke="#ececec" stroke-width="1.3" fill="#ececec"><path d="M5 90.2 H17 M11 84.2 V96.2" fill="none"></path><path d="M3.5 90.2 l2.6 -2.2 v4.4 Z M18.5 90.2 l-2.6 -2.2 v4.4 Z M11 82.7 l-2.2 2.6 h4.4 Z M11 97.7 l-2.2 -2.6 h4.4 Z" stroke="none"></path></g></g><path d="M23.4 97.4 L23.4 100.0 L20.8 100.0 Z" fill="#cfcfcf"></path><rect x="4" y="106.94" width="14.5" height="11.5" fill="none" stroke="#ececec" stroke-width="1.4" stroke-dasharray="3 1.8"></rect><path d="M23.4 119.64 L23.4 122.24 L20.8 122.24 Z" fill="#cfcfcf"></path><path d="M4 129.18 L10 133.68 L18 128.18 L14.5 137.18 L7.5 136.18 L4.5 141.68 L7.4 135.18 Z" fill="none" stroke="#ececec" stroke-width="1.3" stroke-linejoin="round"></path><path d="M23.4 141.88 L23.4 144.48000000000002 L20.8 144.48000000000002 Z" fill="#cfcfcf"></path><g transform="translate(11,156.92000000000002) scale(0.82) translate(-11,-156.92000000000002)"><rect x="4" y="150.42000000000002" width="10.5" height="10.5" fill="none" stroke="#ececec" stroke-width="1.1"></rect><rect x="6.4" y="152.72000000000003" width="5.6" height="5.6" fill="#ececec"></rect><path d="M11.6 156.32000000000002 L19 160.52 L15.6 161.32000000000002 L14.4 164.92000000000002 Z" fill="#ececec" stroke="#535353" stroke-width="0.8"></path></g><path d="M23.4 164.12 L23.4 166.72000000000003 L20.8 166.72000000000003 Z" fill="#cfcfcf"></path><path d="M7 171.16 V183.66 H19 M3 175.16 H15.5 V187.16" fill="none" stroke="#ececec" stroke-width="1.8"></path><path d="M23.4 186.35999999999999 L23.4 188.96 L20.8 188.96 Z" fill="#cfcfcf"></path><g transform="translate(11,201.39999999999998) scale(0.88) translate(-11,-201.39999999999998)"><rect x="4" y="194.89999999999998" width="14" height="13" fill="none" stroke="#ececec" stroke-width="1.4"></rect><path d="M4 194.89999999999998 L18 207.89999999999998 M18 194.89999999999998 L4 207.89999999999998" stroke="#ececec" stroke-width="1.1"></path></g><g transform="translate(11,223.64) scale(0.92) translate(-11,-223.64)"><g transform="translate(11,223.64) rotate(45)"><rect x="-2.6" y="-9.5" width="5.2" height="4.6" rx="1.2" fill="#ececec"></rect><rect x="-3.8" y="-5.2" width="7.6" height="1.8" fill="#ececec"></rect><path d="M-1.7 -3.4 H1.7 V5 L0 8.6 L-1.7 5 Z" fill="none" stroke="#ececec" stroke-width="1.2"></path></g></g><path d="M23.4 230.83999999999997 L23.4 233.44 L20.8 233.44 Z" fill="#cfcfcf"></path><g transform="translate(11,245.88) scale(0.86) translate(-11,-245.88)"><g transform="translate(11,245.88) rotate(-38)"><rect x="-9" y="-3.6" width="18" height="7.2" rx="3.4" fill="#ececec"></rect><rect x="-2.6" y="-3.6" width="5.2" height="7.2" fill="#8a8a8a"></rect><circle cx="-1" cy="-1.2" r="0.6" fill="#ececec"></circle><circle cx="1" cy="1.2" r="0.6" fill="#ececec"></circle><circle cx="1" cy="-1.2" r="0.6" fill="#ececec"></circle><circle cx="-1" cy="1.2" r="0.6" fill="#ececec"></circle></g></g><path d="M23.4 253.07999999999998 L23.4 255.68 L20.8 255.68 Z" fill="#cfcfcf"></path><g transform="translate(11,268.12) rotate(40)"><path d="M-1.3 -9.5 H1.3 L1.9 1 H-1.9 Z" fill="#ececec"></path><path d="M-2 2.2 H2 Q2.4 6.4 0 9.6 Q-2.4 6.4 -2 2.2Z" fill="#ececec"></path></g><path d="M23.4 275.32 L23.4 277.92 L20.8 277.92 Z" fill="#cfcfcf"></path><g transform="translate(11,290.36) scale(0.9) translate(-11,-290.36)"><g transform="translate(11.5,289.76) scale(1.15)" fill="#ececec"><circle cx="0" cy="-4" r="2.6"></circle><path d="M-1.4 -2.4 L1.4 -2.4 L2 1 L5.2 1.6 Q6 1.8 6 2.6 L6 3.8 L-6 3.8 L-6 2.6 Q-6 1.8 -5.2 1.6 L-2 1 Z"></path><rect x="-6" y="4.9" width="12" height="1.5"></rect></g></g><path d="M23.4 297.56 L23.4 300.16 L20.8 300.16 Z" fill="#cfcfcf"></path><g transform="translate(12.5,312.59999999999997) rotate(40)"><path d="M-1.3 -9.5 H1.3 L1.9 0.6 H-1.9 Z" fill="#ececec"></path><path d="M-2 1.8 H2 Q2.4 5.6 0 8.6 Q-2.4 5.6 -2 1.8Z" fill="#ececec"></path></g><path d="M3 309.59999999999997 A5 5 0 0 1 9.5 306.09999999999997" fill="none" stroke="#ececec" stroke-width="1.2"></path><path d="M1.4000000000000004 308.2 l3.4 0.2 l-2 2.8 Z" fill="#ececec"></path><path d="M23.4 319.79999999999995 L23.4 322.4 L20.8 322.4 Z" fill="#cfcfcf"></path><g transform="translate(11,334.84) scale(0.86) translate(-11,-334.84)"><g transform="translate(11,333.84) rotate(-35)"><rect x="-7.5" y="-3.6" width="15" height="7.2" rx="1" fill="#ececec"></rect><rect x="-7.5" y="-3.6" width="5.6" height="7.2" rx="1" fill="#9a9a9a"></rect></g><path d="M3.5 341.44 H17.5" stroke="#ececec" stroke-width="1.2"></path></g><path d="M23.4 342.03999999999996 L23.4 344.64 L20.8 344.64 Z" fill="#cfcfcf"></path><g transform="translate(11,357.08) scale(0.94) translate(-11,-357.08)"><defs><linearGradient id="tg" x1="0" y1="0" x2="1" y2="1"><stop offset="0" stop-color="#f4f4f4"></stop><stop offset="1" stop-color="#555"></stop></linearGradient></defs><rect x="3.5" y="350.58" width="15" height="12.5" fill="url(#tg)" stroke="#ececec" stroke-width="1.3"></rect></g><path d="M23.4 364.28 L23.4 366.88 L20.8 366.88 Z" fill="#cfcfcf"></path><path d="M11 371.82 Q16.2 378.82 16 381.52 A5 5 0 0 1 6 381.52 Q5.8 378.82 11 371.82Z" fill="#ececec"></path><path d="M23.4 386.52 L23.4 389.12 L20.8 389.12 Z" fill="#cfcfcf"></path><g transform="translate(9.5,401.55999999999995) rotate(38)"><path d="M-1.2 -9 H1.2 L1.8 0.6 H-1.8 Z" fill="#ececec"></path><path d="M-2 1.6 H2 Q2.4 5.2 0 8 Q-2.4 5.2 -2 1.6Z" fill="#ececec"></path></g><circle cx="15.4" cy="405.55999999999995" r="3" fill="#535353" stroke="#ececec" stroke-width="1.3"></circle><circle cx="15.4" cy="405.55999999999995" r="1.1" fill="#ececec"></circle><circle cx="13.6" cy="421.19999999999993" r="4.6" fill="#ececec"></circle><circle cx="13.6" cy="421.19999999999993" r="2.4" fill="#bdbdbd"></circle><path d="M10.2 424.59999999999997 L4.6 430.19999999999993" stroke="#ececec" stroke-width="2.6" stroke-linecap="round"></path><path d="M23.4 430.99999999999994 L23.4 433.59999999999997 L20.8 433.59999999999997 Z" fill="#cfcfcf"></path><g transform="translate(11,446.03999999999996) scale(0.84) translate(-11,-446.03999999999996)"><g transform="translate(11,446.03999999999996) rotate(40)"><path d="M0 -9 L4.2 -2 L3 4.5 H-3 L-4.2 -2 Z" fill="none" stroke="#ececec" stroke-width="1.4" stroke-linejoin="round"></path><path d="M0 -8 V-1.6" stroke="#ececec" stroke-width="1"></path><circle cx="0" cy="-0.6" r="1.1" fill="#ececec"></circle><rect x="-3.4" y="5.8" width="6.8" height="2" fill="#ececec"></rect></g></g><path d="M23.4 453.23999999999995 L23.4 455.84 L20.8 455.84 Z" fill="#cfcfcf"></path><g transform="translate(11,490.52) scale(0.8) translate(-11,-490.52)"><path d="M5.8 482.52 L16.6 493.32 L11.8 493.52 L14.4 498.71999999999997 L11.6 499.71999999999997 L9.2 494.71999999999997 L5.8 497.91999999999996 Z" fill="#1e1e1e" stroke="#ececec" stroke-width="1"></path></g><path d="M23.4 497.71999999999997 L23.4 500.32 L20.8 500.32 Z" fill="#cfcfcf"></path><g transform="translate(11,513.46) scale(0.94) translate(-11,-512.76)"><rect x="3.5" y="506.26" width="15" height="12.5" fill="#6a6a6a" stroke="#ececec" stroke-width="1.3"></rect></g><path d="M23.4 519.96 L23.4 522.56 L20.8 522.56 Z" fill="#cfcfcf"></path><path d="M23.4 475.47999999999996 L23.4 478.08 L20.8 478.08 Z" fill="#cfcfcf"></path></svg>
<div class="t" style="left: 5.7px; top: 461px; font-size: 17.5px; color: rgb(236, 236, 236); font-weight: normal; font-family: &quot;Liberation Serif&quot;, serif; transform: scaleX(1.0745);">T</div>
<div class="r" style="left:58.2px;top:120.2px;width:709.8px;height:389.0px;background:#f0f0f0;"></div>
<div class="r" style="left:58.2px;top:162.6px;width:709.8px;height:1.0px;background:#bdbdbd;"></div>
<div class="r" style="left:413.0px;top:163.0px;width:1.0px;height:346.2px;background:#aaaaaa;"></div>
<div class="r" style="left:78.3px;top:191.8px;width:314.9px;height:239.0px;background:#ffffff;"></div>
<div class="r" style="left:433.0px;top:191.8px;width:314.3px;height:239.0px;background:#ffffff;"></div>
<div class="t" style="left: 174.3px; top: 134px; font-size: 19.5px; color: rgb(12, 12, 12); font-weight: bold; -webkit-text-stroke: 0.3px rgb(12, 12, 12); transform: scaleX(1.0065);">So sánh 2 trường hợp Clone Stamp / Healing Brush</div>
<div class="t" style="left: 152.3px; top: 170px; font-size: 14.5px; color: rgb(28, 28, 28); font-weight: normal; -webkit-text-stroke: 0.5px rgb(28, 28, 28); transform: scaleX(0.9789);">Case 1 (Aligned Checked)</div>
<div class="t" style="left: 499.8px; top: 170px; font-size: 14.5px; color: rgb(28, 28, 28); font-weight: normal; -webkit-text-stroke: 0.5px rgb(28, 28, 28); transform: scaleX(0.9871);">Case 2 (Aligned Unchecked)</div>
<div class="t" style="left: 152.5px; top: 442px; font-size: 14px; color: rgb(20, 20, 20); font-weight: bold; transform: scaleX(0.9637);">Case 1 (Aligned Checked)</div>
<div class="t" style="left: 498.8px; top: 442px; font-size: 14px; color: rgb(20, 20, 20); font-weight: bold; transform: scaleX(0.972);">Case 2 (Aligned Unchecked)</div>
<div class="t" style="left: 84.9px; top: 466px; font-size: 13.8px; color: rgb(34, 34, 34); font-weight: normal; -webkit-text-stroke: 0.25px rgb(34, 34, 34); transform: scaleX(0.9602);">Khi nhả chuột và vẽ nét mới, điểm lấy mẫu (dấu +)</div>
<div class="t" style="left: 108px; top: 483px; font-size: 13.8px; color: rgb(34, 34, 34); font-weight: normal; -webkit-text-stroke: 0.25px rgb(34, 34, 34); transform: scaleX(0.9865);">di chuyển tiếp tục, tạo hình ảnh liền mạch.</div>
<div class="t" style="left: 441px; top: 466px; font-size: 13.8px; color: rgb(34, 34, 34); font-weight: normal; -webkit-text-stroke: 0.25px rgb(34, 34, 34); transform: scaleX(0.9709);">Khi nhả chuột và vẽ nét mới, điểm lấy mẫu (dấu +)</div>
<div class="t" style="left: 434.7px; top: 483px; font-size: 13.8px; color: rgb(34, 34, 34); font-weight: normal; -webkit-text-stroke: 0.25px rgb(34, 34, 34); transform: scaleX(0.9703);">quay ngược trở lại vị trí ban đầu, lặp lại hình ảnh cũ.</div>
<div class="t" style="left: 347.1px; top: 228px; font-size: 12.8px; color: rgb(46, 46, 46); font-weight: normal; transform: scaleX(0.9188);">Stroke 1</div>
<div class="t" style="left: 334px; top: 300px; font-size: 12.8px; color: rgb(46, 46, 46); font-weight: normal; transform: scaleX(0.923);">Stroke 1</div>
<div class="t" style="left: 341.3px; top: 358px; font-size: 12.8px; color: rgb(46, 46, 46); font-weight: normal; transform: scaleX(0.9586);">Stroke 2</div>
<div class="t" style="left: 699px; top: 228px; font-size: 12.8px; color: rgb(46, 46, 46); font-weight: normal; transform: scaleX(0.923);">Stroke 1</div>
<div class="t" style="left: 691px; top: 300px; font-size: 12.8px; color: rgb(46, 46, 46); font-weight: normal; transform: scaleX(0.9649);">Stroke 2</div>
<svg class="r" style="left:0;top:0" width="0" height="0">
<defs>
<radialGradient id="rg1" cx="0.5" cy="0.4" r="0.65"><stop offset="0" stop-color="#c0131d"></stop><stop offset="0.5" stop-color="#cb1822"></stop><stop offset="1" stop-color="#bf121c"></stop></radialGradient>
<radialGradient id="rg2" cx="0.45" cy="0.45" r="0.65"><stop offset="0" stop-color="#c4121d"></stop><stop offset="0.6" stop-color="#cf1621"></stop><stop offset="1" stop-color="#c2121c"></stop></radialGradient>
<filter id="rb" x="-8%" y="-8%" width="116%" height="116%"><feTurbulence type="fractalNoise" baseFrequency="0.07" numOctaves="2" seed="4" result="n"></feTurbulence><feDisplacementMap in="SourceGraphic" in2="n" scale="7" xChannelSelector="R" yChannelSelector="G" result="d"></feDisplacementMap><feGaussianBlur in="d" stdDeviation="0.8"></feGaussianBlur></filter>
<filter id="rb3" x="-8%" y="-8%" width="116%" height="116%"><feTurbulence type="fractalNoise" baseFrequency="0.06" numOctaves="2" seed="9" result="n"></feTurbulence><feDisplacementMap in="SourceGraphic" in2="n" scale="5" xChannelSelector="R" yChannelSelector="G" result="d"></feDisplacementMap><feGaussianBlur in="d" stdDeviation="1"></feGaussianBlur></filter>
<clipPath id="rc"><path d="M1.0,26.2 C1.5,22.7 2.0,24.3 3.6,22.7 C5.2,21.1 4.9,21.2 7.0,20.1 C9.1,19.0 8.8,19.8 11.4,18.4 C14.0,17.0 14.7,17.0 16.6,14.9 C18.5,12.8 17.0,12.6 18.4,10.5 C19.8,8.4 19.5,8.8 21.8,7.0 C24.1,5.2 23.7,5.2 27.0,3.6 C30.3,2.0 30.3,1.7 34.0,1.0 C37.7,0.3 37.7,0.5 41.0,1.0 C44.3,1.5 42.7,1.8 46.2,2.7 C49.7,3.6 50.7,4.6 54.0,4.4 C57.3,4.2 55.8,2.9 58.4,1.8 C61.0,0.7 60.4,0.2 63.6,0.1 C66.8,-0.0 67.2,0.2 70.5,1.3 C73.8,2.4 73.0,2.4 75.8,4.4 C78.6,6.4 78.7,6.5 81.0,8.8 C83.3,11.1 83.1,10.5 84.5,13.1 C85.9,15.7 85.5,15.4 86.2,18.4 C86.9,21.4 85.6,21.6 87.0,24.4 C88.4,27.2 88.4,26.5 91.4,28.8 C94.4,31.1 96.8,30.8 98.4,33.1 C100.0,35.4 98.2,35.4 97.5,37.5 C96.8,39.6 97.2,38.9 95.8,41.0 C94.4,43.1 94.2,43.2 92.3,45.3 C90.4,47.4 88.1,47.4 88.8,48.8 C89.5,50.2 93.4,48.9 94.9,50.5 C96.4,52.1 95.1,52.3 94.6,54.9 C94.1,57.5 95.0,57.3 93.2,60.1 C91.4,62.9 90.8,62.7 88.0,65.3 C85.2,67.9 86.0,67.6 82.7,69.7 C79.4,71.8 80.0,71.5 75.8,73.2 C71.6,74.9 71.2,75.0 67.0,76.1 C62.8,77.2 64.7,77.6 60.1,77.5 C55.5,77.4 54.3,77.2 49.7,75.8 C45.1,74.4 46.0,74.2 42.7,72.3 C39.4,70.4 41.7,71.6 37.5,68.8 C33.3,66.0 32.1,66.0 27.0,61.8 C21.9,57.6 23.0,56.9 18.4,53.2 C13.8,49.5 13.4,50.7 9.7,47.9 C6.0,45.1 6.5,45.9 4.4,42.7 C2.3,39.5 2.7,40.2 1.8,35.8 C0.9,31.4 0.5,29.7 1.0,26.2 Z"></path></clipPath>
<!-- cut-out variant -->
<symbol id="rose" viewBox="-2 -2 104 82" overflow="visible">
<path d="M1.0,26.2 C1.5,22.7 2.0,24.3 3.6,22.7 C5.2,21.1 4.9,21.2 7.0,20.1 C9.1,19.0 8.8,19.8 11.4,18.4 C14.0,17.0 14.7,17.0 16.6,14.9 C18.5,12.8 17.0,12.6 18.4,10.5 C19.8,8.4 19.5,8.8 21.8,7.0 C24.1,5.2 23.7,5.2 27.0,3.6 C30.3,2.0 30.3,1.7 34.0,1.0 C37.7,0.3 37.7,0.5 41.0,1.0 C44.3,1.5 42.7,1.8 46.2,2.7 C49.7,3.6 50.7,4.6 54.0,4.4 C57.3,4.2 55.8,2.9 58.4,1.8 C61.0,0.7 60.4,0.2 63.6,0.1 C66.8,-0.0 67.2,0.2 70.5,1.3 C73.8,2.4 73.0,2.4 75.8,4.4 C78.6,6.4 78.7,6.5 81.0,8.8 C83.3,11.1 83.1,10.5 84.5,13.1 C85.9,15.7 85.5,15.4 86.2,18.4 C86.9,21.4 85.6,21.6 87.0,24.4 C88.4,27.2 88.4,26.5 91.4,28.8 C94.4,31.1 96.8,30.8 98.4,33.1 C100.0,35.4 98.2,35.4 97.5,37.5 C96.8,39.6 97.2,38.9 95.8,41.0 C94.4,43.1 94.2,43.2 92.3,45.3 C90.4,47.4 88.1,47.4 88.8,48.8 C89.5,50.2 93.4,48.9 94.9,50.5 C96.4,52.1 95.1,52.3 94.6,54.9 C94.1,57.5 95.0,57.3 93.2,60.1 C91.4,62.9 90.8,62.7 88.0,65.3 C85.2,67.9 86.0,67.6 82.7,69.7 C79.4,71.8 80.0,71.5 75.8,73.2 C71.6,74.9 71.2,75.0 67.0,76.1 C62.8,77.2 64.7,77.6 60.1,77.5 C55.5,77.4 54.3,77.2 49.7,75.8 C45.1,74.4 46.0,74.2 42.7,72.3 C39.4,70.4 41.7,71.6 37.5,68.8 C33.3,66.0 32.1,66.0 27.0,61.8 C21.9,57.6 23.0,56.9 18.4,53.2 C13.8,49.5 13.4,50.7 9.7,47.9 C6.0,45.1 6.5,45.9 4.4,42.7 C2.3,39.5 2.7,40.2 1.8,35.8 C0.9,31.4 0.5,29.7 1.0,26.2 Z" fill="url(#rg1)"></path>
<g clip-path="url(#rc)"><g filter="url(#rb)">
<!-- darker lower-left / bottom -->
<path d="M14,48 C20,56 30,62 42,66 C52,69 64,69 76,64 C84,60 90,55 93,51 L97,58 L90,70 L62,80 L44,80 L16,60 Z" fill="#8c0a12"></path>
<path d="M26,62 C36,70 50,75 66,73" fill="none" stroke="#7a0810" stroke-width="3"></path>
<!-- lower right petal -->
<path d="M74,65 C82,61 88,56 92,50.5 L95,51 C95,58 92,63 89,66 C84,70 78,72 74,73 Z" fill="#b0101a"></path>
<!-- big lower petal -->
<path d="M0,26 C4,36 10,44 20,50 C32,57 46,60 60,59 C76,58 90,48 99,34 C100,40 96,46 90,51 C82,59 68,65 52,65 C36,64 22,57 12,50 C5,44 1,36 0,26Z" fill="#cc1923"></path>
<!-- top petals lighter -->
<path d="M19,9 C24,3 32,0 38,0 C44,1 48,3 50,4 C56,1 64,-1 72,2 C80,6 84,12 86,22 C82,14 76,10 68,9 C60,8 54,10 49,13 C42,9 34,9 27,12 C24,13 21,15 19,17 Z" fill="#ce1b25"></path>
<!-- right outer petal -->
<path d="M76,10 C83,14 86,21 87,30 C92,31 96,32 99,34 C94,42 88,47 80,50 C86,42 86,32 83,25 C81,19 79,14 76,10Z" fill="#cd1a24"></path>
<!-- shadow crescents -->
<path d="M20,14 C17,23 18,33 24,41 C29,47 37,52 47,54" fill="none" stroke="#8c0a12" stroke-width="3.6"></path>
<path d="M33,15 C29,23 30,33 35,40 C39,45 45,49 53,50" fill="none" stroke="#8a0a12" stroke-width="3"></path>
<path d="M70,14 C77,20 81,28 80,36 C79,44 73,50 65,54" fill="none" stroke="#8c0a12" stroke-width="3.4"></path>
<path d="M38,15 C46,10 58,10 66,14" fill="none" stroke="#950b14" stroke-width="2.4"></path>
<path d="M62,19 C68,23 71,30 69,37 C67,43 61,47 54,48" fill="none" stroke="#8e0a13" stroke-width="2.6"></path>
<!-- inner bud -->
<path d="M42,23 C46,18 55,17 60,21 C65,25 65,33 61,37 C56,42 48,42 44,38 C40,34 39,28 42,23Z" fill="#ae0f19"></path>
<path d="M43,26 C46,21 54,21 58,24" fill="none" stroke="#860911" stroke-width="2.4"></path>
<path d="M46,30 C48,26 54,26 57,29 C59,32 57,36 53,37 C49,37 45,34 46,30Z" fill="#930b14"></path>
<ellipse cx="51.4" cy="29.4" rx="2.2" ry="1.3" fill="#6e0c24"></ellipse>
<!-- highlight strokes -->
<path d="M4,24 C9,17 16,12 24,6" fill="none" stroke="#d92832" stroke-width="3"></path><path d="M5,30 C7,38 13,44 22,49" fill="none" stroke="#d6242e" stroke-width="3"></path>
<path d="M10,47 C24,57 44,62 62,60.5 C76,59 88,51 96,39" fill="none" stroke="#da2a34" stroke-width="3"></path>
<path d="M54,5.5 C61,3 70,4 78,9" fill="none" stroke="#d82731" stroke-width="2.6"></path><path d="M26,7 C32,3.5 40,3.5 46,6" fill="none" stroke="#d6252f" stroke-width="2.4"></path>
<path d="M26,14 C23,24 25,34 31,42" fill="none" stroke="#d4232d" stroke-width="2.4"></path>
<path d="M75,15 C82,24 84,33 80,43" fill="none" stroke="#d4232d" stroke-width="2.6"></path><path d="M89,31 C93,33 96,35 96,38" fill="none" stroke="#d82731" stroke-width="3"></path>
</g></g>
</symbol>
<!-- photo variant (more contrast) -->
<symbol id="rosep" viewBox="-2 -2 104 82" overflow="visible">
<path d="M1.0,26.2 C1.5,22.7 2.0,24.3 3.6,22.7 C5.2,21.1 4.9,21.2 7.0,20.1 C9.1,19.0 8.8,19.8 11.4,18.4 C14.0,17.0 14.7,17.0 16.6,14.9 C18.5,12.8 17.0,12.6 18.4,10.5 C19.8,8.4 19.5,8.8 21.8,7.0 C24.1,5.2 23.7,5.2 27.0,3.6 C30.3,2.0 30.3,1.7 34.0,1.0 C37.7,0.3 37.7,0.5 41.0,1.0 C44.3,1.5 42.7,1.8 46.2,2.7 C49.7,3.6 50.7,4.6 54.0,4.4 C57.3,4.2 55.8,2.9 58.4,1.8 C61.0,0.7 60.4,0.2 63.6,0.1 C66.8,-0.0 67.2,0.2 70.5,1.3 C73.8,2.4 73.0,2.4 75.8,4.4 C78.6,6.4 78.7,6.5 81.0,8.8 C83.3,11.1 83.1,10.5 84.5,13.1 C85.9,15.7 85.5,15.4 86.2,18.4 C86.9,21.4 85.6,21.6 87.0,24.4 C88.4,27.2 88.4,26.5 91.4,28.8 C94.4,31.1 96.8,30.8 98.4,33.1 C100.0,35.4 98.2,35.4 97.5,37.5 C96.8,39.6 97.2,38.9 95.8,41.0 C94.4,43.1 94.2,43.2 92.3,45.3 C90.4,47.4 88.1,47.4 88.8,48.8 C89.5,50.2 93.4,48.9 94.9,50.5 C96.4,52.1 95.1,52.3 94.6,54.9 C94.1,57.5 95.0,57.3 93.2,60.1 C91.4,62.9 90.8,62.7 88.0,65.3 C85.2,67.9 86.0,67.6 82.7,69.7 C79.4,71.8 80.0,71.5 75.8,73.2 C71.6,74.9 71.2,75.0 67.0,76.1 C62.8,77.2 64.7,77.6 60.1,77.5 C55.5,77.4 54.3,77.2 49.7,75.8 C45.1,74.4 46.0,74.2 42.7,72.3 C39.4,70.4 41.7,71.6 37.5,68.8 C33.3,66.0 32.1,66.0 27.0,61.8 C21.9,57.6 23.0,56.9 18.4,53.2 C13.8,49.5 13.4,50.7 9.7,47.9 C6.0,45.1 6.5,45.9 4.4,42.7 C2.3,39.5 2.7,40.2 1.8,35.8 C0.9,31.4 0.5,29.7 1.0,26.2 Z" fill="url(#rg2)"></path>
<g clip-path="url(#rc)"><g filter="url(#rb3)">
<!-- lowest petal -->
<path d="M18,54 C28,62 44,66 60,64 C74,62 86,56 93,50 L96,58 L90,70 L62,80 L44,80 L18,62 Z" fill="#cf1722"></path>
<!-- dark band under bloom -->
<path d="M16,50 C22,55 27,58 36,61 C46,64 60,64 72,60 C80,57 86,53 90,49.5" fill="none" stroke="#7f0911" stroke-width="5.5"></path>
<path d="M72,68 C80,64 88,58 93,52" fill="none" stroke="#9a0c15" stroke-width="2.4"></path>
<path d="M40,74 C50,77.5 62,77.5 72,74" fill="none" stroke="#a60e17" stroke-width="2"></path>
<!-- outer left petal -->
<path d="M0,27 C3,21 8,18 13,17 C15,12 18,9 22,6 C18,16 17,28 20,38 C22,45 27,50 33,53 C22,51 10,46 5,40 C2,36 0,31 0,27Z" fill="#d81b27"></path>
<!-- top petals -->
<path d="M22,6 C27,2 32,0.8 36,0.8 C42,1 47,2.6 50,3.6 C54,1.6 58,0.8 62,0.8 C68,1 72,3 74,4.4 C80,7 83,12 86,22 C82,15 76,11 68,10 C60,9 54,10 49,13 C42,9 34,9 27,13 C25,14 23,16 21,18 Z" fill="#d61a26"></path>
<!-- right petal -->
<path d="M83,13 C86,18 86,22 87,25 C92,27 97,29 100,35 C99,41 96,46 90,49 C84,50 80,50 76,50 C84,43 85,33 82,25 C81,20 82,16 83,13Z" fill="#d41925"></path>
<!-- left inner shadow -->
<path d="M24,16 C19,24 18,36 22,43 C25,48 29,51 34,53" fill="none" stroke="#8a0a12" stroke-width="4"></path>
<!-- bright ridge -->
<path d="M31.5,15 C27,24 27,36 31,44 C33,48 36,50 40,52" fill="none" stroke="#d91b27" stroke-width="3"></path>
<!-- middle body -->
<path d="M36,16 C44,10 58,10 66,14 C73,18 75,28 72,38 C69,46 60,52 50,52 C41,52 35,46 34,38 C33,30 33,22 36,16Z" fill="#b8101a"></path>
<!-- top ring bright -->
<path d="M40,15 C48,10.5 58,10.5 66,15 C60,14 50,14.4 42,18Z" fill="#d61a26"></path>
<path d="M39,16 C47,11 59,11 67,16" fill="none" stroke="#d51a25" stroke-width="3"></path>
<!-- right inner shadow + ridge -->
<path d="M67,24 C71,30 72,38 66,47" fill="none" stroke="#8a0a12" stroke-width="3.2"></path>
<path d="M75,18 C82,26 84,36 76,48" fill="none" stroke="#d71a26" stroke-width="4"></path>
<path d="M71,17 C78,26 79,38 71,49" fill="none" stroke="#a00d16" stroke-width="1.6"></path>
<!-- inner petals -->
<path d="M44,22 C50,18 58,19 62,24 C65,30 63,38 57,42 C51,45 45,43 43,38 C41,32 41,26 44,22Z" fill="#c6141f"></path>
<path d="M45,24 C50,20 57,21 61,25" fill="none" stroke="#9a0c15" stroke-width="2"></path>
<path d="M47,40 C52,43 58,41 61,36" fill="none" stroke="#a00d16" stroke-width="1.8"></path>
<!-- centre dark -->
<ellipse cx="38.4" cy="29.5" rx="4.8" ry="7.4" fill="#7d0810"></ellipse>
<ellipse cx="46" cy="30" rx="3" ry="5" fill="#9a0c15"></ellipse>
<!-- highlights -->
<path d="M6,30 C8,38 14,45 24,50" fill="none" stroke="#e0222e" stroke-width="2.4"></path>
<path d="M48,70 C58,72 70,70 80,63" fill="none" stroke="#dc1f2b" stroke-width="2.6"></path>
<path d="M26,6 C32,3 40,3 46,5" fill="none" stroke="#dc1f2b" stroke-width="2"></path>
<path d="M56,4.4 C62,3 70,4 76,8" fill="none" stroke="#dc1f2b" stroke-width="2"></path>
</g></g>
</symbol>
</defs></svg>
<svg class="r" style="left:84.6px;top:210.6px;" width="137" height="121.6" viewBox="0 0 137 121.6">
<defs>
<filter id="pb84" x="-10%" y="-10%" width="120%" height="120%"><feGaussianBlur stdDeviation="5"></feGaussianBlur></filter>
<filter id="pl84" x="-10%" y="-10%" width="120%" height="120%"><feGaussianBlur stdDeviation="0.8"></feGaussianBlur></filter>
<filter id="pl284" x="-10%" y="-10%" width="120%" height="120%"><feGaussianBlur stdDeviation="2"></feGaussianBlur></filter>
<clipPath id="pc84"><rect x="0" y="0" width="137" height="121.6"></rect></clipPath>
</defs>
<g clip-path="url(#pc84)">
<rect x="0" y="0" width="137" height="121.6" fill="#27332a"></rect>
<g filter="url(#pb84)">
<ellipse cx="18" cy="20" rx="40" ry="30" fill="#1c2a20"></ellipse>
<ellipse cx="70" cy="4" rx="40" ry="12" fill="#222e25"></ellipse>
<ellipse cx="125" cy="45" rx="18" ry="30" fill="#323d30"></ellipse>
<ellipse cx="120" cy="100" rx="26" ry="24" fill="#36442f"></ellipse>
<ellipse cx="10" cy="90" rx="16" ry="30" fill="#243427"></ellipse>
<ellipse cx="75" cy="110" rx="30" ry="16" fill="#2f4535"></ellipse>
</g>
<g filter="url(#pl284)">
<!-- lower right blurred leaves -->
<path d="M58,92 C70,84 86,88 92,100 C94,110 88,122 80,124 L52,124 C50,112 52,100 58,92Z" fill="#48705a"></path>
<path d="M64,96 C72,90 82,92 86,100 C80,106 70,108 62,104Z" fill="#568262"></path>
</g>
<g filter="url(#pl84)">
<!-- big left leaf -->
<path d="M10.5,37.5 C20,38 34,46 42,58 C48,68 49,80 46,90 C34,88 22,80 16,68 C11,58 9,46 10.5,37.5Z" fill="#568262"></path>
<path d="M10.5,37.5 C18,40 30,50 38,62 C44,72 46,82 46,90 C40,76 30,58 10.5,37.5Z" fill="#487357"></path>
<path d="M12,40 C24,54 36,70 45,88" fill="none" stroke="#6d9a70" stroke-width="0.9"></path>
<!-- lower left leaf -->
<path d="M6.5,107 C10,98 22,92 34,93 C40,94 44,96 45,98 C42,108 34,116 22,118 C14,118 8,114 6.5,107Z" fill="#568262"></path>
<path d="M6.5,107 C16,104 30,100 45,98 C40,108 32,116 22,118 C14,118 8,114 6.5,107Z" fill="#487357"></path>
<path d="M8,107 C20,103 32,100 44,98" fill="none" stroke="#6f9c72" stroke-width="0.8"></path>
<!-- stems -->
<path d="M65.5,84 C62,96 56,108 50,122" fill="none" stroke="#6ea35c" stroke-width="3"></path>
<path d="M52,80 C50,88 48,94 45.5,98" fill="none" stroke="#5f8f57" stroke-width="1.4"></path>
<path d="M46,90 C48,96 50,100 53,104" fill="none" stroke="#5f8f57" stroke-width="1.2"></path>
</g>
<use href="#rosep" x="21" y="6.4" width="104" height="82"></use>
</g></svg>
<svg class="r" style="left:439.6px;top:210.6px;" width="137" height="121.6" viewBox="0 0 137 121.6">
<defs>
<filter id="pb439" x="-10%" y="-10%" width="120%" height="120%"><feGaussianBlur stdDeviation="5"></feGaussianBlur></filter>
<filter id="pl439" x="-10%" y="-10%" width="120%" height="120%"><feGaussianBlur stdDeviation="0.8"></feGaussianBlur></filter>
<filter id="pl2439" x="-10%" y="-10%" width="120%" height="120%"><feGaussianBlur stdDeviation="2"></feGaussianBlur></filter>
<clipPath id="pc439"><rect x="0" y="0" width="137" height="121.6"></rect></clipPath>
</defs>
<g clip-path="url(#pc439)">
<rect x="0" y="0" width="137" height="121.6" fill="#27332a"></rect>
<g filter="url(#pb439)">
<ellipse cx="18" cy="20" rx="40" ry="30" fill="#1c2a20"></ellipse>
<ellipse cx="70" cy="4" rx="40" ry="12" fill="#222e25"></ellipse>
<ellipse cx="125" cy="45" rx="18" ry="30" fill="#323d30"></ellipse>
<ellipse cx="120" cy="100" rx="26" ry="24" fill="#36442f"></ellipse>
<ellipse cx="10" cy="90" rx="16" ry="30" fill="#243427"></ellipse>
<ellipse cx="75" cy="110" rx="30" ry="16" fill="#2f4535"></ellipse>
</g>
<g filter="url(#pl2439)">
<!-- lower right blurred leaves -->
<path d="M58,92 C70,84 86,88 92,100 C94,110 88,122 80,124 L52,124 C50,112 52,100 58,92Z" fill="#48705a"></path>
<path d="M64,96 C72,90 82,92 86,100 C80,106 70,108 62,104Z" fill="#568262"></path>
</g>
<g filter="url(#pl439)">
<!-- big left leaf -->
<path d="M10.5,37.5 C20,38 34,46 42,58 C48,68 49,80 46,90 C34,88 22,80 16,68 C11,58 9,46 10.5,37.5Z" fill="#568262"></path>
<path d="M10.5,37.5 C18,40 30,50 38,62 C44,72 46,82 46,90 C40,76 30,58 10.5,37.5Z" fill="#487357"></path>
<path d="M12,40 C24,54 36,70 45,88" fill="none" stroke="#6d9a70" stroke-width="0.9"></path>
<!-- lower left leaf -->
<path d="M6.5,107 C10,98 22,92 34,93 C40,94 44,96 45,98 C42,108 34,116 22,118 C14,118 8,114 6.5,107Z" fill="#568262"></path>
<path d="M6.5,107 C16,104 30,100 45,98 C40,108 32,116 22,118 C14,118 8,114 6.5,107Z" fill="#487357"></path>
<path d="M8,107 C20,103 32,100 44,98" fill="none" stroke="#6f9c72" stroke-width="0.8"></path>
<!-- stems -->
<path d="M65.5,84 C62,96 56,108 50,122" fill="none" stroke="#6ea35c" stroke-width="3"></path>
<path d="M52,80 C50,88 48,94 45.5,98" fill="none" stroke="#5f8f57" stroke-width="1.4"></path>
<path d="M46,90 C48,96 50,100 53,104" fill="none" stroke="#5f8f57" stroke-width="1.2"></path>
</g>
<use href="#rosep" x="21" y="6.4" width="104" height="82"></use>
</g></svg>
<svg class="r" style="left:0.0px;top:0.0px;" width="1000" height="529" viewBox="0 0 1000 529"><defs><filter id="sb" x="-20%" y="-5%" width="140%" height="110%"><feGaussianBlur stdDeviation="0.6"></feGaussianBlur></filter><linearGradient id="sg" x1="0" y1="0" x2="1" y2="0"><stop offset="0" stop-color="#4d6a2f"></stop><stop offset="0.45" stop-color="#6f8f48"></stop><stop offset="1" stop-color="#3c5526"></stop></linearGradient></defs><g filter="url(#sb)"><path d="M310.6,288 C311,296 315.4,302 317.2,308 C318.6,312 318.8,317 319,322" fill="none" stroke="#da727c" stroke-width="7.6" stroke-linecap="round"></path><path d="M309.4,288 C309.8,296 314.2,302 316,308 C317.4,312 317.6,317 317.8,322" fill="none" stroke="#c94a58" stroke-width="1.6"></path><path d="M312.6,288 C313,296 317.4,302 319.2,308 C320.6,312 320.8,317 321,322" fill="none" stroke="#cc5562" stroke-width="1.4"></path><path d="M320.2,329 C321.6,340 324.4,352 327.7,364.7 C330,373 332.2,380 332.6,388 C333,396 332.6,408 330.8,419" fill="none" stroke="#628640" stroke-width="9" stroke-linecap="butt"></path><path d="M317.6,329 C319,340 321.8,352 325.1,364.7 C327.4,373 329.6,380 330,388 C330.4,396 330,408 328.2,419" fill="none" stroke="#426e2c" stroke-width="2.6"></path><path d="M321.4,329 C322.8,340 325.6,352 328.9,364.7 C331.2,373 333.4,380 333.8,388 C334.2,396 333.8,408 332,419" fill="none" stroke="#93b56a" stroke-width="2"></path><path d="M323.6,330 C325,340 327.8,352 331.1,364.7 C333.4,373 335.6,380 336,388 C336.4,396 336,408 334.2,418" fill="none" stroke="#4d7a34" stroke-width="1.8"></path><path d="M326.6,417 L335,418.4 L334.4,421.4 L326.2,420.4 Z" fill="#a9c48c"></path><path d="M318.8,324.5 C319,328 319.2,331 319.6,334" fill="none" stroke="#9cba90" stroke-width="6.4"></path></g><use href="#rose" x="254" y="211" width="104" height="82"></use><use href="#rose" x="608.6" y="211" width="104" height="82"></use><use href="#rose" x="618.8" y="328" width="104" height="82"></use><path d="M270.5,279.8 C273.5,291 280,303 294.5,316.4" fill="none" stroke="#111" stroke-width="1.8"></path><path d="M299.6,320.6 L289.8,318.4 L297.2,311.4 Z" fill="#111"></path><path d="M673.1,283 C677.4,292 681,303 682.5,316" fill="none" stroke="#111" stroke-width="2"></path><path d="M683.2,322.4 L676.8,313.2 L688.2,312.8 Z" fill="#111"></path><g fill="none"><circle cx="259.4" cy="253.2" r="9.9" stroke="#ffffff" stroke-opacity="0.45" stroke-width="2.6"></circle><circle cx="259.4" cy="253.2" r="9.9" stroke="#4a4a4a" stroke-width="1.1"></circle><path d="M254.6,253.2 H264.2 M259.4,248.4 V258" stroke="#e8e8e8" stroke-opacity="0.6" stroke-width="2"></path><path d="M254.6,253.2 H264.2 M259.4,248.4 V258" stroke="#555" stroke-width="0.9"></path><circle cx="317.9" cy="325.2" r="10.2" stroke="#ffffff" stroke-opacity="0.4" stroke-width="2.4"></circle><circle cx="317.9" cy="325.2" r="10.2" stroke="#404040" stroke-width="1.3"></circle><path d="M313.4,325.2 H322.4 M317.9,320.6 V329.8" stroke="#4a4a4a" stroke-width="0.9"></path></g><g fill="none"><path d="M680.4,336.6 H691 M685.7,331.3 V341.9" stroke="#e8e8e8" stroke-width="2.6"></path><path d="M680.4,336.6 H691 M685.7,331.3 V341.9" stroke="#444" stroke-width="1"></path></g></svg>
<div class="r" style="left:776.4px;top:147.4px;width:209.0px;height:256.0px;background:#1f1f1f;box-shadow:1px 1.5px 2.5px rgba(0,0,0,0.55);"></div>
<div class="r" style="left:777.0px;top:148.0px;width:207.7px;height:254.7px;background:#535353;"></div>
<div class="r" style="left:777.0px;top:148.0px;width:207.7px;height:11.5px;background:#454545;"></div>
<div class="r" style="left:777.0px;top:159.5px;width:207.7px;height:24.0px;background:#424242;"></div>
<div class="r" style="left:777.0px;top:159.5px;width:67.5px;height:24.0px;background:#535353;"></div>
<div class="r" style="left:844.5px;top:159.5px;width:1.0px;height:24.0px;background:#3a3a3a;"></div>
<div class="t" style="left: 785px; top: 166px; font-size: 9.4px; color: rgb(246, 246, 246); font-weight: bold; transform: scaleX(0.8687);">Clone Source</div>
<svg class="r" style="left:956.0px;top:150.0px;" width="30" height="9" viewBox="0 0 30 9"><path d="M5.4 1.2 L3 4.2 L5.4 7.2 M9 1.2 L6.6 4.2 L9 7.2" fill="none" stroke="#e4e4e4" stroke-width="1.2"></path><path d="M19.6 1.8 L24 6.4 M24 1.8 L19.6 6.4" stroke="#e4e4e4" stroke-width="1.5"></path></svg>
<svg class="r" style="left:971.5px;top:166.8px;" width="9" height="8" viewBox="0 0 9 8"><path d="M0 0.8 H8 M0 2.8 H8 M0 4.8 H8 M0 6.8 H8" stroke="#bcbcbc" stroke-width="1"></path></svg>
<div class="r" style="left:895.7px;top:190.5px;width:20.2px;height:20.2px;background:#2b2b2b;"></div>
<svg class="r" style="left:770.0px;top:180.0px;" width="230" height="40" viewBox="0 0 230 40"><g transform="translate(62.2,21.199999999999996) scale(0.95)" fill="#ececec"><circle cx="0" cy="-4" r="2.6"></circle><path d="M-1.4 -2.4 L1.4 -2.4 L2 1 L5.2 1.6 Q6 1.8 6 2.6 L6 3.8 L-6 3.8 L-6 2.6 Q-6 1.8 -5.2 1.6 L-2 1 Z"></path><rect x="-6" y="4.9" width="12" height="1.5"></rect></g><path d="M51.4 14.199999999999994 h1.3 M51.4 16.599999999999994 h1.3 M51.4 18.999999999999993 h1.3 M53.6 14.199999999999994 h2.6 M53.6 16.599999999999994 h2.2 M53.6 18.999999999999993 h2.2" stroke="#ececec" stroke-width="1" fill="none"></path><g transform="translate(86.49999999999996,21.199999999999996) scale(0.95)" fill="#ececec"><circle cx="0" cy="-4" r="2.6"></circle><path d="M-1.4 -2.4 L1.4 -2.4 L2 1 L5.2 1.6 Q6 1.8 6 2.6 L6 3.8 L-6 3.8 L-6 2.6 Q-6 1.8 -5.2 1.6 L-2 1 Z"></path><rect x="-6" y="4.9" width="12" height="1.5"></rect></g><path d="M75.69999999999996 14.199999999999994 h1.3 M75.69999999999996 16.599999999999994 h1.3 M75.69999999999996 18.999999999999993 h1.3 M77.89999999999995 14.199999999999994 h2.6 M77.89999999999995 16.599999999999994 h2.2 M77.89999999999995 18.999999999999993 h2.2" stroke="#ececec" stroke-width="1" fill="none"></path><g transform="translate(111.80000000000003,21.199999999999996) scale(0.95)" fill="#ececec"><circle cx="0" cy="-4" r="2.6"></circle><path d="M-1.4 -2.4 L1.4 -2.4 L2 1 L5.2 1.6 Q6 1.8 6 2.6 L6 3.8 L-6 3.8 L-6 2.6 Q-6 1.8 -5.2 1.6 L-2 1 Z"></path><rect x="-6" y="4.9" width="12" height="1.5"></rect></g><path d="M101.00000000000003 14.199999999999994 h1.3 M101.00000000000003 16.599999999999994 h1.3 M101.00000000000003 18.999999999999993 h1.3 M103.20000000000002 14.199999999999994 h2.6 M103.20000000000002 16.599999999999994 h2.2 M103.20000000000002 18.999999999999993 h2.2" stroke="#ececec" stroke-width="1" fill="none"></path><g transform="translate(138.2,21.199999999999996) scale(0.95)" fill="#ececec"><circle cx="0" cy="-4" r="2.6"></circle><path d="M-1.4 -2.4 L1.4 -2.4 L2 1 L5.2 1.6 Q6 1.8 6 2.6 L6 3.8 L-6 3.8 L-6 2.6 Q-6 1.8 -5.2 1.6 L-2 1 Z"></path><rect x="-6" y="4.9" width="12" height="1.5"></rect></g><path d="M127.4 14.199999999999994 h1.3 M127.4 16.599999999999994 h1.3 M127.4 18.999999999999993 h1.3 M129.6 14.199999999999994 h2.6 M129.6 16.599999999999994 h2.2 M129.6 18.999999999999993 h2.2" stroke="#ececec" stroke-width="1" fill="none"></path><g transform="translate(162.49999999999994,21.199999999999996) scale(0.95)" fill="#ececec"><circle cx="0" cy="-4" r="2.6"></circle><path d="M-1.4 -2.4 L1.4 -2.4 L2 1 L5.2 1.6 Q6 1.8 6 2.6 L6 3.8 L-6 3.8 L-6 2.6 Q-6 1.8 -5.2 1.6 L-2 1 Z"></path><rect x="-6" y="4.9" width="12" height="1.5"></rect></g><path d="M151.69999999999996 14.199999999999994 h1.3 M151.69999999999996 16.599999999999994 h1.3 M151.69999999999996 18.999999999999993 h1.3 M153.89999999999995 14.199999999999994 h2.6 M153.89999999999995 16.599999999999994 h2.2 M153.89999999999995 18.999999999999993 h2.2" stroke="#ececec" stroke-width="1" fill="none"></path></svg>
<div class="t" style="left: 787.3px; top: 252px; font-size: 9px; color: rgb(218, 218, 218); font-weight: normal; transform: scaleX(0.9636);">Offset:</div>
<div class="t" style="left: 787.5px; top: 268px; font-size: 9px; color: rgb(218, 218, 218); font-weight: normal; transform: scaleX(0.9394);">X:</div>
<div class="f" style="left:799.5px;top:265px;width:58.2px;height:14px;background:#454545;border-color:#626262"></div>
<div class="t" style="left: 803.5px; top: 268px; font-size: 9px; color: rgb(244, 244, 244); font-weight: normal; transform: scaleX(0.9697);">0 px</div>
<div class="t" style="left: 787.5px; top: 285px; font-size: 9px; color: rgb(218, 218, 218); font-weight: normal; transform: scaleX(0.9981);">Y:</div>
<div class="f" style="left:799.5px;top:282px;width:58.2px;height:13.5px;background:#454545;border-color:#626262"></div>
<div class="t" style="left: 803.5px; top: 285px; font-size: 9px; color: rgb(244, 244, 244); font-weight: normal; transform: scaleX(0.9697);">0 px</div>
<div class="r" style="left:862.3px;top:238.0px;width:18.4px;height:17.3px;background:#2e2e2e;"></div>
<svg class="r" style="left:862.0px;top:238.0px;" width="19" height="18" viewBox="0 0 19 18"><rect x="2.6" y="9" width="5.4" height="6" fill="#ececec"></rect><rect x="10.4" y="9" width="5.4" height="6" fill="#ececec"></rect><path d="M4.4 7.2 C5.4 3.4 12 3 14 6.4" fill="none" stroke="#ececec" stroke-width="1.3"></path><path d="M15.6 7.6 L12.4 7 L14.8 4.4 Z" fill="#ececec"></path></svg>
<div class="t" style="left: 885.3px; top: 244px; font-size: 9px; color: rgb(218, 218, 218); font-weight: normal; transform: scaleX(0.8761);">W:</div>
<div class="f" style="left:898.7px;top:239.7px;width:57px;height:14px;background:#454545;border-color:#626262"></div>
<div class="t" style="left: 903px; top: 243px; font-size: 9px; color: rgb(244, 244, 244); font-weight: normal; transform: scaleX(0.9171);">100.0%</div>
<svg class="r" style="left:865.0px;top:266.5px;" width="14" height="17" viewBox="0 0 14 17"><rect x="1" y="1.4" width="4.8" height="5.4" fill="#ececec"></rect><rect x="1" y="9" width="4.8" height="5.4" fill="#ececec"></rect><path d="M7.6 2.6 C12 3.4 12.4 11 8.4 13" fill="none" stroke="#ececec" stroke-width="1.3"></path><path d="M7 14.2 L8 11 L10.4 13.4 Z" fill="#ececec"></path></svg>
<div class="t" style="left: 888px; top: 271px; font-size: 9px; color: rgb(218, 218, 218); font-weight: normal; transform: scaleX(0.9444);">H:</div>
<div class="f" style="left:898.7px;top:268px;width:57px;height:13.5px;background:#454545;border-color:#626262"></div>
<div class="t" style="left: 903px; top: 271px; font-size: 9px; color: rgb(244, 244, 244); font-weight: normal; transform: scaleX(0.9171);">100.0%</div>
<svg class="r" style="left:964.0px;top:244.0px;" width="18" height="32" viewBox="0 0 18 32"><path d="M1 3.6 H9.6 V6.4 M1 28.4 H9.6 V25.6" fill="none" stroke="#d8d8d8" stroke-width="1.1"></path></svg>
<div class="r" style="left:965.6px;top:253.0px;width:14.4px;height:15.0px;background:#2c2c2c;border:1px solid #6a6a6a;"></div>
<svg class="r" style="left:965.6px;top:253.0px;" width="15" height="15" viewBox="0 0 15 15"><rect x="5" y="2.6" width="4.6" height="5.6" rx="2.3" fill="none" stroke="#ececec" stroke-width="1.3"></rect><rect x="5" y="6.8" width="4.6" height="5.6" rx="2.3" fill="none" stroke="#ececec" stroke-width="1.3"></rect><path d="M7.3 5.4 V9.6" stroke="#ececec" stroke-width="1.2"></path></svg>
<svg class="r" style="left:891.0px;top:290.5px;" width="14" height="12" viewBox="0 0 14 12"><path d="M1 9.6 L12 9.6 M1 9.6 L10.4 1.8 M7.6 9.4 A5 5 0 0 0 5.8 5.8" fill="none" stroke="#dcdcdc" stroke-width="1.1"></path></svg>
<div class="f" style="left:911px;top:288.8px;width:34px;height:14.5px;background:#454545;border-color:#626262"></div>
<div class="t" style="left: 914.5px; top: 293px; font-size: 9px; color: rgb(244, 244, 244); font-weight: normal; transform: scaleX(0.8789);">0.0</div>
<svg class="r" style="left:952.0px;top:292.0px;" width="8" height="8" viewBox="0 0 8 8"><circle cx="3.8" cy="3.6" r="1.6" fill="#6e6e6e" stroke="#8a8a8a" stroke-width="0.6"></circle></svg>
<svg class="r" style="left:963.5px;top:289.5px;" width="15" height="14" viewBox="0 0 15 14"><path d="M4 7.6 A4.2 4.2 0 1 1 8 11.4" fill="none" stroke="#ececec" stroke-width="1.4"></path><path d="M1.2 6.2 L6.6 6.2 L3.9 9.8 Z" fill="#ececec"></path><path d="M2.4 12.2 H12.6" stroke="#ececec" stroke-width="1.3"></path></svg>
<div class="t" style="left: 792.6px; top: 321px; font-size: 9px; color: rgb(218, 218, 218); font-weight: normal; transform: scaleX(0.926);">Frame Offset:</div>
<div class="f" style="left:852.6px;top:317.7px;width:57.7px;height:13.5px;background:#454545;border-color:#626262"></div>
<div class="t" style="left: 856.4px; top: 321px; font-size: 9px; color: rgb(244, 244, 244); font-weight: normal; transform: scaleX(0.9171);">0</div>
<svg class="r" style="left:914.0px;top:320.0px;" width="10" height="10" viewBox="0 0 10 10"><rect x="0.6" y="0.6" width="8.2" height="8.2" rx="1.6" fill="#4a4a4a" stroke="#7a7a7a" stroke-width="1"></rect></svg>
<div class="t" style="left: 926.9px; top: 321px; font-size: 9px; color: rgb(218, 218, 218); font-weight: normal; transform: scaleX(0.9113);">Lock Frame</div>
<svg class="r" style="left:782.4px;top:343.0px;" width="10" height="10" viewBox="0 0 10 10"><rect x="0.2" y="0.2" width="9" height="9" rx="1.6" fill="#ececec"></rect><path d="M2 4.6 L4 6.8 L7.2 2.4" fill="none" stroke="#2e2e2e" stroke-width="1.7"></path></svg>
<div class="t" style="left: 795px; top: 344px; font-size: 9px; color: rgb(236, 236, 236); font-weight: normal; transform: scaleX(0.9209);">Show Overlay</div>
<div class="t" style="left: 797.7px; top: 364px; font-size: 9px; color: rgb(218, 218, 218); font-weight: normal; transform: scaleX(0.9389);">Opacity:</div>
<div class="f" style="left:838px;top:360.4px;width:42.7px;height:13.3px;background:#454545;border-color:#626262"></div>
<div class="t" style="left: 842px; top: 364px; font-size: 9px; color: rgb(244, 244, 244); font-weight: normal; transform: scaleX(0.9335);">100%</div>
<div class="f" style="left:796.5px;top:382.7px;width:60px;height:17px;background:#494949;border-color:#666"></div>
<div class="t" style="left: 802.3px; top: 388px; font-size: 9px; color: rgb(244, 244, 244); font-weight: normal; transform: scaleX(0.9133);">Normal</div>
<svg class="r" style="left:844.0px;top:384.0px;" width="14" height="14" viewBox="0 0 14 14"><path d="M4 5.8 L7 8.6 L10 5.8" fill="none" stroke="#d8d8d8" stroke-width="1.2"></path></svg>
<svg class="r" style="left:923.8px;top:352.4px;" width="10" height="10" viewBox="0 0 10 10"><rect x="0.2" y="0.2" width="9" height="9" rx="1.6" fill="#ececec"></rect><path d="M2 4.6 L4 6.8 L7.2 2.4" fill="none" stroke="#2e2e2e" stroke-width="1.7"></path></svg>
<div class="t" style="left: 936.5px; top: 353px; font-size: 9px; color: rgb(236, 236, 236); font-weight: normal; transform: scaleX(0.9007);">Clipped</div>
<svg class="r" style="left:923.8px;top:365.0px;" width="10" height="10" viewBox="0 0 10 10"><rect x="0.6" y="0.6" width="8.2" height="8.2" rx="1.6" fill="#4a4a4a" stroke="#7a7a7a" stroke-width="1"></rect></svg>
<div class="t" style="left: 936.5px; top: 366px; font-size: 9px; color: rgb(218, 218, 218); font-weight: normal; transform: scaleX(0.936);">Auto Hide</div>
<svg class="r" style="left:923.8px;top:377.7px;" width="10" height="10" viewBox="0 0 10 10"><rect x="0.6" y="0.6" width="8.2" height="8.2" rx="1.6" fill="#4a4a4a" stroke="#7a7a7a" stroke-width="1"></rect></svg>
<div class="t" style="left: 936.5px; top: 379px; font-size: 9px; color: rgb(218, 218, 218); font-weight: normal; transform: scaleX(1.0437);">Invert</div>


</body></html>
